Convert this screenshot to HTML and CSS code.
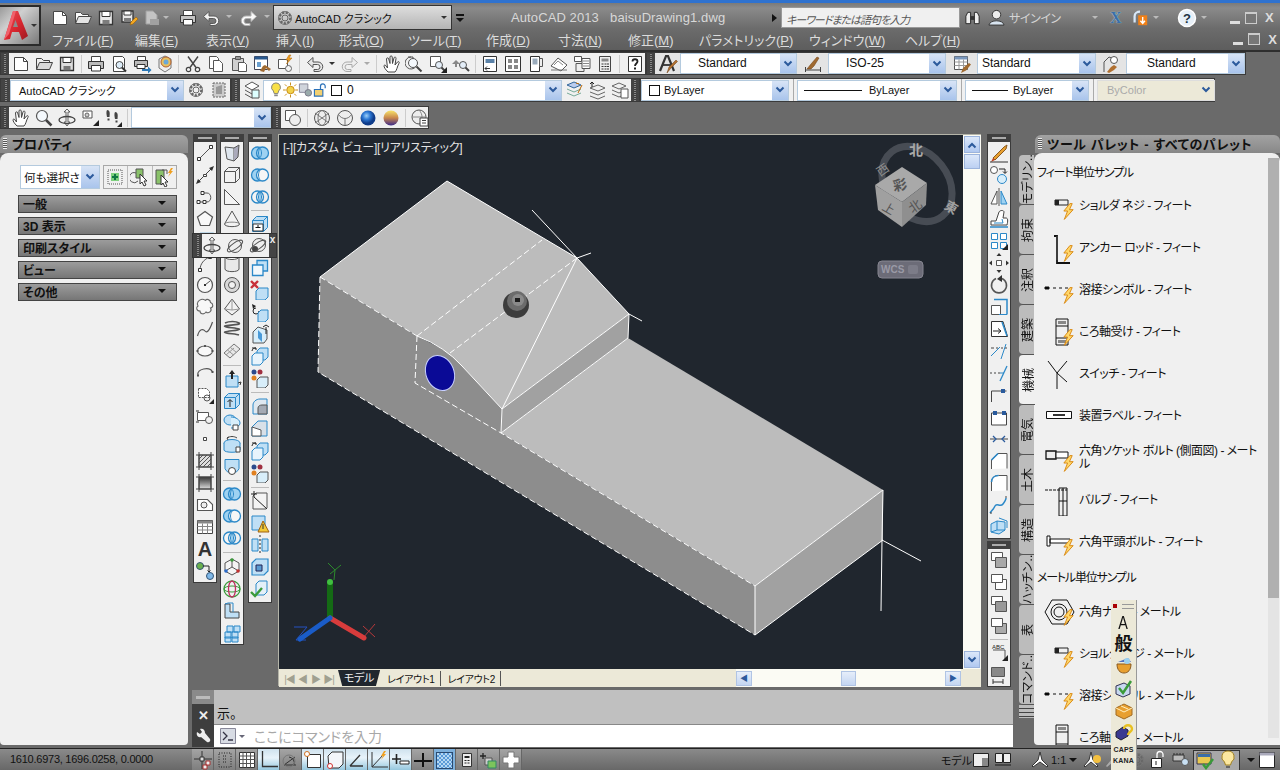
FILE: index.html
```html
<!DOCTYPE html>
<html lang="ja">
<head>
<meta charset="utf-8">
<title>AutoCAD 2013 - baisuDrawing1.dwg</title>
<link rel="stylesheet" href="styles.css">
</head>
<body>
<svg class="defs" width="0" height="0">
<defs>
<symbol id="chev" viewBox="0 0 10 8"><path d="M1.5 1.5 5 5l3.5-3.5" fill="none" stroke="#2c5a9c" stroke-width="2"/></symbol>
<symbol id="new" viewBox="0 0 20 20"><path d="M3.5 3.5h9l4 4v9h-13z" fill="#fff" stroke="#444"/><path d="M12.5 3.5v4h4" fill="none" stroke="#444"/></symbol>
<symbol id="open" viewBox="0 0 20 20"><path d="M2.5 15.5v-11h5l2 2h6v2" fill="#eee" stroke="#444"/><path d="M2.5 15.5l3-7h13l-3 7z" fill="#d9d9d9" stroke="#444"/></symbol>
<symbol id="save" viewBox="0 0 20 20"><path d="M3.5 3.5h13v13h-13z" fill="#ddd" stroke="#333" stroke-width="1.3"/><path d="M6 3.5h8v5H6z" fill="#fff" stroke="#333"/><path d="M6.500 12h7v4.500h-7z" fill="#777"/></symbol>
<symbol id="saveas" viewBox="0 0 20 20"><path d="M3 3h11v11H3z" fill="#ddd" stroke="#333" stroke-width="1.300"/><path d="M5 3h7v4H5z" fill="#fff" stroke="#333"/><path d="M5 10h7v4H5z" fill="#777"/><path d="M11 17l1-3 5-5 2 2-5 5z" fill="#e8a020" stroke="#8a5a10" stroke-width=".6"/></symbol>
<symbol id="plot" viewBox="0 0 20 20"><path d="M4 3h7l4 4v9H4z" fill="#bbb" stroke="#999"/><path d="M8 11h9v6H8z" fill="#999"/></symbol>
<symbol id="print" viewBox="0 0 20 20"><path d="M5.500 2.500h9v5h-9z" fill="#fff" stroke="#444"/><path d="M2.500 7.500h15v7h-15z" fill="#bbb" stroke="#333"/><path d="M5.500 11.500h9v5.500h-9z" fill="#fff" stroke="#333"/></symbol>
<symbol id="preview" viewBox="0 0 20 20"><path d="M4.500 2.500h9l2 2v13h-11z" fill="#fff" stroke="#444"/><circle cx="10.500" cy="11" r="3.500" fill="#dcecf8" stroke="#444"/><path d="M13 13.500l4 4" stroke="#333" stroke-width="2"/></symbol>
<symbol id="plotp" viewBox="0 0 20 20"><path d="M5.500 2.500h8v4h-8z" fill="#fff" stroke="#444"/><path d="M2.500 6.500h13v6h-13z" fill="#bbb" stroke="#333"/><path d="M5 10.500h8v4H5z" fill="#fff" stroke="#333"/><path d="M10 15h6v-2.500l3.500 3.500-3.500 3.500V17h-6z" fill="#2c79b8"/></symbol>
<symbol id="publish" viewBox="0 0 20 20"><path d="M4 5l6-3 6 3v9l-6 4-6-4z" fill="#eee" stroke="#777"/><circle cx="11" cy="8" r="5" fill="#e8c060" stroke="#b06030"/><circle cx="11" cy="8" r="2.500" fill="#6aa8d8"/></symbol>
<symbol id="cut" viewBox="0 0 20 20"><path d="M5 2.500l8 11M15 2.500l-8 11" stroke="#444" stroke-width="1.400" fill="none"/><circle cx="5.500" cy="15.500" r="2.200" fill="none" stroke="#444" stroke-width="1.200"/><circle cx="14.500" cy="15.500" r="2.200" fill="none" stroke="#444" stroke-width="1.200"/></symbol>
<symbol id="copy" viewBox="0 0 20 20"><path d="M3.500 2.500h7l2 2v10h-9z" fill="#fff" stroke="#555"/><path d="M7.500 6.500h6l3 3v8h-9z" fill="#fff" stroke="#555"/></symbol>
<symbol id="paste" viewBox="0 0 20 20"><path d="M3.500 4.500h11v12h-11z" fill="#d0d0d0" stroke="#555"/><path d="M6.500 2.500h5v3h-5z" fill="#999" stroke="#555"/><path d="M9.500 8.500h6l2 2v7h-8z" fill="#fff" stroke="#555"/></symbol>
<symbol id="match" viewBox="0 0 20 20"><path d="M2.500 2.500h13v13h-13z" fill="#fff" stroke="#445"/><path d="M2.500 2.500h13v3h-13z" fill="#29598f"/><path d="M5 8h4v5H5z" fill="#6a9fd0"/><path d="M8 17l3-5 2-1 6 4-2 2-3-3-2 4z" fill="#a06a30"/></symbol>
<symbol id="block" viewBox="0 0 20 20"><path d="M3.500 5.500h9v9h-9z" fill="#fff" stroke="#555"/><circle cx="13.500" cy="14.500" r="3" fill="#f3f3f3" stroke="#666"/><path d="M14 1l-3 5h2.500l-2 4 5.500-6h-3l2-3z" fill="#f0a020" stroke="#b06a10" stroke-width=".5"/></symbol>
<symbol id="undo" viewBox="0 0 20 20"><path d="M8 3.500 2.500 8.500 8 13.500v-3h4.500a2.500 2.500 0 0 1 0 5H9v2h4a4.500 4.500 0 0 0 0-9.500H8z" fill="#e6e6e6" stroke="#555"/></symbol>
<symbol id="redo" viewBox="0 0 20 20"><path d="M12 3.500l5.500 5-5.500 5v-3H7.500a2.500 2.500 0 0 0 0 5H11v2H7a4.500 4.500 0 0 1 0-9.500h5z" fill="#eee" stroke="#aaa"/></symbol>
<symbol id="pan" viewBox="0 0 20 20"><path d="M6 18c-3-3-4-5-4-6s1-1.500 2 0l1.500 2L4.500 5c0-1.500 2-1.500 2.200 0L8 9.500 8 3c0-1.500 2.200-1.500 2.200 0l.3 6.500L12 4c.3-1.500 2.300-1 2 .5l-1 6.500 2.500-3c1-1 2.300 0 1.500 1.200C15 13 15 16 13 18z" fill="#fff" stroke="#444"/></symbol>
<symbol id="zoom" viewBox="0 0 20 20"><circle cx="8" cy="8" r="5.500" fill="#f4f8fc" stroke="#555" stroke-width="1.200"/><path d="M12 12l5.500 5.500" stroke="#444" stroke-width="2.500"/></symbol>
<symbol id="zprev" viewBox="0 0 20 20"><path d="M6 3a6 6 0 1 0 6 5" fill="none" stroke="#555"/><path d="M3 3h5v4" fill="none" stroke="#555"/><circle cx="8" cy="9" r="4.500" fill="#f4f8fc" stroke="#555"/><path d="M11.500 12.500l5 5" stroke="#444" stroke-width="2"/></symbol>
<symbol id="zwin" viewBox="0 0 20 20"><path d="M2.500 2.500h10v10h-10z" fill="#fff" stroke="#555"/><circle cx="11" cy="11" r="3.500" fill="#e4eef8" stroke="#555"/><path d="M13.500 13.500l3 3" stroke="#444" stroke-width="2"/><path d="M13 19l6-6v6z" fill="#222"/></symbol>
<symbol id="zrealp" viewBox="0 0 20 20"><path d="M1 10l4-4 4 4H6v3H4v-3z" fill="#888"/><circle cx="12" cy="11" r="3.500" fill="#e4eef8" stroke="#555"/><path d="M14.500 13.500l3.500 3.500" stroke="#444" stroke-width="2"/></symbol>
<symbol id="props" viewBox="0 0 20 20"><path d="M3.500 2.500h13v15h-13z" fill="#fff" stroke="#333"/><path d="M5.500 5h9v4h-9z" fill="#5b82a8"/><path d="M10 14.500H5l2-2M5 14.500l2 2" stroke="#333" fill="none"/></symbol>
<symbol id="dc" viewBox="0 0 20 20"><path d="M2.500 2.500h15v15h-15z" fill="#fff" stroke="#333"/><path d="M5 5h4v4H5zM11 5h4v4h-4zM5 11h4v4H5zM11 11h4v4h-4z" fill="#888"/></symbol>
<symbol id="tp" viewBox="0 0 20 20"><path d="M4.500 2.500h9v15h-9z" fill="#fff" stroke="#333"/><path d="M6.500 4.500h5v6h-5z" fill="#9ab"/><path d="M13.500 4.500h3v8h-3z" fill="#eee" stroke="#555"/></symbol>
<symbol id="sheet" viewBox="0 0 20 20"><path d="M2 12l7-8 9 7-6 6z" fill="#fff" stroke="#555"/><path d="M5 11l4-4 5 4" fill="none" stroke="#888"/><path d="M2 16h16" stroke="#777"/></symbol>
<symbol id="markup" viewBox="0 0 20 20"><path d="M2.500 2.500h7v5h-7z" fill="#fff" stroke="#555"/><path d="M4 9.500h8v8H4z" fill="#eee" stroke="#555"/><path d="M10 4.500h8v10h-8z" fill="#fff" stroke="#555"/><path d="M11 7h6M11 9.500h6M11 12h6" stroke="#888"/></symbol>
<symbol id="calc" viewBox="0 0 20 20"><path d="M4.500 2.500h11v15h-11z" fill="#eee" stroke="#444"/><path d="M6.500 4.500h7v3h-7z" fill="#888"/><path d="M6.500 9.500h2v1h-2zM9.500 9.500h2v1h-2zM12 9.500h2v1h-2zM6.500 12h2v1h-2zM9.500 12h2v1h-2zM12 12h2v1h-2zM6.500 14.500h2v1h-2zM9.500 14.500h2v1h-2zM12 14.500h2v1h-2z" fill="#333"/></symbol>
<symbol id="help" viewBox="0 0 20 20"><path d="M3.500 2.500h13v15h-13z" fill="#fff" stroke="#333"/><path d="M7.500 7.500c0-3 5-3 5 0 0 2-2.500 2-2.500 4.500" fill="none" stroke="#222" stroke-width="1.800"/><path d="M9 13.500h2v2H9z" fill="#222"/></symbol>
<symbol id="sa" viewBox="0 0 20 20"><path d="M2 17L8 2h2l6 15" fill="none" stroke="#333" stroke-width="2.200"/><path d="M5 11h8" stroke="#333" stroke-width="1.800"/><path d="M9 19l2-6 7-7 1.500 1.500-7 7z" fill="#b07030" stroke="#6a3a10" stroke-width=".5"/></symbol>
<symbol id="sd" viewBox="0 0 20 20"><path d="M2.500 13v5M17.500 13v5M2.500 16h15" stroke="#444" fill="none"/><path d="M4 15l4-5 6-7 2 1-5 8-3 3z" fill="#a06a30" stroke="#6a3a10" stroke-width=".5"/></symbol>
<symbol id="st" viewBox="0 0 20 20"><path d="M2.500 2.500h13v13h-13z" fill="#fff" stroke="#555"/><path d="M2.500 2.500h13v3h-13z" fill="#7a98be"/><path d="M2.500 8h13M2.500 11.500h13M7 5.500v10M11.500 5.500v10" stroke="#999"/><path d="M9 19l2-5 6-5 2 1.500-5 6z" fill="#a06a30"/></symbol>
<symbol id="sm" viewBox="0 0 20 20"><path d="M3 18V8l5-5 5 2" fill="none" stroke="#555"/><circle cx="13" cy="6" r="3.500" fill="#fff" stroke="#555"/><path d="M6 18l4-5 3-2 3 2-3 3-5 3z" fill="#b07030"/></symbol>
<symbol id="gear" viewBox="0 0 20 20"><circle cx="10" cy="10" r="5.500" fill="none" stroke="#666" stroke-width="2.600" stroke-dasharray="2.400 1.300"/><circle cx="10" cy="10" r="6.500" fill="none" stroke="#777"/><circle cx="10" cy="10" r="3" fill="none" stroke="#666"/></symbol>
<symbol id="wsp" viewBox="0 0 20 20"><path d="M4 3h12v14H4z" fill="#ccc" stroke="#666" stroke-dasharray="2 1"/><path d="M7 7l6-2v9H7z" fill="#999"/></symbol>
<symbol id="lprops" viewBox="0 0 20 20"><path d="M3 6l7-4 7 4-7 4z" fill="#fff" stroke="#555"/><path d="M3 10l7 4 7-4M3 14l7 4 7-4" fill="none" stroke="#555"/><path d="M10 10h7v8h-7z" fill="#dff" stroke="#555"/></symbol>
<symbol id="bulb" viewBox="0 0 14 18"><path d="M7 1a5 5 0 0 0-3 9l1 3h4l1-3a5 5 0 0 0-3-9z" fill="#f8e048" stroke="#777"/><path d="M5 14h4v2H5z" fill="#888"/></symbol>
<symbol id="sun" viewBox="0 0 16 16"><circle cx="8" cy="8" r="4" fill="#f3d24a" stroke="#c58a10"/><path d="M8 0v3M8 13v3M0 8h3M13 8h3M2 2l2 2M12 12l2 2M2 14l2-2M12 4l2-2" stroke="#c58a10"/></symbol>
<symbol id="frz" viewBox="0 0 16 16"><path d="M1.500 1.500h9v9h-9z" fill="#d0d4dc" stroke="#889"/><circle cx="11" cy="11" r="3.500" fill="#9aa" stroke="#778"/></symbol>
<symbol id="lock" viewBox="0 0 16 16"><path d="M1.500 7.500h9v7h-9z" fill="#f3d070" stroke="#2a70b8" stroke-width="1.200"/><path d="M8 7V4a2.500 2.500 0 0 1 5 0v2" fill="none" stroke="#2a70b8" stroke-width="1.300"/></symbol>
<symbol id="lstack" viewBox="0 0 20 20"><path d="M3 5l7-3 7 3-7 3z" fill="#bce" stroke="#369"/><path d="M3 9l7 3 7-3M3 13l7 3 7-3" fill="none" stroke="#7a9"/><path d="M12 3l3 1M14 13l4-8" stroke="#b60"/></symbol>
<symbol id="lprev" viewBox="0 0 20 20"><path d="M3 8l8-3 7 3-7 3zM3 12l8 3 7-3M3 16l8 3 7-3" fill="none" stroke="#666"/><path d="M5 2v5M3 4l2-2 2 2" fill="none" stroke="#222"/></symbol>
<symbol id="lstate" viewBox="0 0 20 20"><path d="M2 6l7-3 7 3-7 3zM2 10l7 3 7-3M2 14l7 3 7-3" fill="none" stroke="#666"/><path d="M11 9h7v9h-7z" fill="#fff" stroke="#555"/></symbol>
<symbol id="orb" viewBox="0 0 20 20"><path d="M10 1l3 3h-2v10h2l-3 4-3-4h2V4H7z" fill="#eee" stroke="#444" stroke-width=".8"/><ellipse cx="10" cy="12" rx="8" ry="3.500" fill="none" stroke="#444" stroke-width="1.300"/></symbol>
<symbol id="orb2" viewBox="0 0 20 20"><circle cx="10" cy="10" r="6.500" fill="#eee" stroke="#555"/><ellipse cx="10" cy="10" rx="9" ry="3" transform="rotate(-35 10 10)" fill="none" stroke="#555"/></symbol>
<symbol id="orb3" viewBox="0 0 20 20"><circle cx="11" cy="9" r="6.500" fill="#eee" stroke="#555"/><circle cx="7" cy="13" r="3" fill="#444"/><ellipse cx="10" cy="10" rx="9" ry="3" transform="rotate(-35 10 10)" fill="none" stroke="#555"/></symbol>
<symbol id="camera" viewBox="0 0 20 20"><path d="M3 3h9v7H3z" fill="#fff" stroke="#555"/><circle cx="7" cy="7" r="2" fill="#ccc" stroke="#666"/><path d="M13 18l6-6v6z" fill="#222"/></symbol>
<symbol id="walk" viewBox="0 0 20 20"><path d="M4 2c3 0 3 3 2.500 7H4C3.500 6 3 4 4 2zM4.500 10.500h2v2h-2zM12 4c3 0 3 3 2.500 7H12c-.5-3-1-5 0-7zM12.500 12.500h2v2h-2z" fill="#444"/><path d="M14 19l5-5v5z" fill="#222"/></symbol>
<symbol id="vs1" viewBox="0 0 20 20"><path d="M2.500 2.500h10v10h-10z" fill="#fff" stroke="#555"/><circle cx="12" cy="12" r="5.500" fill="#eee" stroke="#555"/></symbol>
<symbol id="vs2" viewBox="0 0 20 20"><circle cx="10" cy="10" r="7.500" fill="#eee" stroke="#555"/><ellipse cx="10" cy="10" rx="4" ry="7.500" fill="none" stroke="#777"/><path d="M3 5l14 10M17 5L3 15" stroke="#777"/></symbol>
<symbol id="vs3" viewBox="0 0 20 20"><circle cx="10" cy="10" r="7.500" fill="#eee" stroke="#555"/><path d="M3 6c4 6 10 6 14 0M10 17V11" fill="none" stroke="#777"/></symbol>
<radialGradient id="gb" cx=".4" cy=".35"><stop offset="0" stop-color="#9ed0f8"/><stop offset=".5" stop-color="#2e7ad6"/><stop offset="1" stop-color="#0f3c8a"/></radialGradient>
<linearGradient id="gy" x1="0" y1="0" x2="0" y2="1"><stop offset="0" stop-color="#f8e46a"/><stop offset=".5" stop-color="#c8864c"/><stop offset="1" stop-color="#3a2a8c"/></linearGradient>
<linearGradient id="gr" x1="0" y1="0" x2="1" y2="1"><stop offset="0" stop-color="#e8525a"/><stop offset=".55" stop-color="#d8262e"/><stop offset="1" stop-color="#9c1a22"/></linearGradient>
<symbol id="vs4" viewBox="0 0 20 20"><circle cx="10" cy="10" r="7.500" fill="url(#gb)"/></symbol>
<symbol id="vs5" viewBox="0 0 20 20"><circle cx="10" cy="10" r="7.500" fill="url(#gy)"/></symbol>
<symbol id="vs6" viewBox="0 0 20 20"><circle cx="9" cy="9" r="7" fill="#eee" stroke="#555"/><path d="M2 9h14M9 2c4 4 4 10 0 14" fill="none" stroke="#888"/><path d="M10 10h8v8h-8z" fill="#fff" stroke="#444"/><path d="M12 12.500h4M12 15h4" stroke="#444"/></symbol>

<symbol id="l-line" viewBox="0 0 20 20"><path d="M4 16 16 4" stroke="#555"/><path d="M2.500 14.500h3v3h-3zM14.500 2.500h3v3h-3z" fill="#fff" stroke="#333"/></symbol>
<symbol id="l-xline" viewBox="0 0 20 20"><path d="M3 17 17 3" stroke="#444"/><path d="M1 19l2-5 3 3zM19 1l-2 5-3-3z" fill="#333"/><path d="M8.500 9.500h3v2h-3z" fill="#fff" stroke="#444"/></symbol>
<symbol id="l-pline" viewBox="0 0 20 20"><path d="M4 15h8c5 0 5-9 0-9H8" fill="none" stroke="#555"/><path d="M2 13.500h3v3H2zM8 13.500h3v3H8zM6 4.500h3v3H6z" fill="#fff" stroke="#333"/></symbol>
<symbol id="l-poly" viewBox="0 0 20 20"><path d="M10 2.500 17.500 8l-3 8.500h-9L2.500 8z" fill="#f8f8f8" stroke="#555" stroke-width="1.200"/></symbol>
<symbol id="l-arc" viewBox="0 0 20 20"><path d="M5 17c0-6 4-11 10-13" fill="none" stroke="#555"/><path d="M3.500 15.500h3v3h-3zM13.500 2.500h3v3h-3z" fill="#fff" stroke="#333"/></symbol>
<symbol id="l-circle" viewBox="0 0 20 20"><circle cx="10" cy="10" r="7.500" fill="#f8f8f8" stroke="#555" stroke-width="1.200"/><path d="M10 10l5-4" stroke="#555"/><path d="M9 9h2v2H9z" fill="#333"/></symbol>
<symbol id="l-cloud" viewBox="0 0 20 20"><path d="M6 2.500c3-1 4 1 4.500 1 1-2 5-1 5 2 3 1 3 5 0 5.500 2 3-2 6-4.500 4-2 3-6 2-6-1-4 0-4-4-2-5-2-3 1-6 3-6.500z" fill="#f8f8f8" stroke="#666" stroke-width="1.100"/></symbol>
<symbol id="l-spline" viewBox="0 0 20 20"><path d="M2.500 17c2-8 6-7 7.500-5s4 1 7.500-9" fill="none" stroke="#555" stroke-width="1.200"/></symbol>
<symbol id="l-ell" viewBox="0 0 20 20"><ellipse cx="10" cy="10" rx="7.500" ry="5" fill="#f8f8f8" stroke="#555" stroke-width="1.100"/><path d="M1.500 9h2v2h-2zM16.500 9h2v2h-2zM9 4h2v2H9z" fill="#555"/></symbol>
<symbol id="l-ella" viewBox="0 0 20 20"><path d="M3 12C1 6 15 3 17.500 9" fill="none" stroke="#555" stroke-width="1.100"/><path d="M2 11.500h2v2H2zM16.500 8h2v2h-2z" fill="#555"/></symbol>
<symbol id="l-insert" viewBox="0 0 20 20"><path d="M3.500 3.500h8l3 3v6h-11z" fill="#fff" stroke="#555" stroke-dasharray="2 1"/><circle cx="12" cy="13" r="3" fill="none" stroke="#555"/><path d="M14 19l5-5v5z" fill="#222"/></symbol>
<symbol id="l-block" viewBox="0 0 20 20"><path d="M2.500 5.500h11v8h-11z" fill="#fff" stroke="#555"/><circle cx="14" cy="13" r="3.500" fill="#f0f0f0" stroke="#555"/><path d="M1 4h3M1 15h3" stroke="#333"/></symbol>
<symbol id="l-point" viewBox="0 0 20 20"><path d="M8.500 8.500h3v3h-3z" fill="#fff" stroke="#444"/></symbol>
<symbol id="l-hatch" viewBox="0 0 20 20"><path d="M4 4h12v12H4z" fill="#ddd" stroke="#444"/><path d="M4 8l4-4M4 12l8-8M4 16 16 4M8 16l8-8M12 16l4-4" stroke="#555"/><path d="M1 4h18M1 16h18M4 1v18M16 1v18" stroke="#444"/></symbol>
<symbol id="l-grad" viewBox="0 0 20 20"><linearGradient id="gg" x1="0" y1="0" x2="0" y2="1"><stop offset="0" stop-color="#333"/><stop offset="1" stop-color="#ddd"/></linearGradient><path d="M4 4h12v12H4z" fill="url(#gg)" stroke="#444"/><path d="M1 4h18M1 16h18M4 1v18M16 1v18" stroke="#444"/></symbol>
<symbol id="l-region" viewBox="0 0 20 20"><path d="M2.500 4.500h10l5 5v6h-15z" fill="#fff" stroke="#555" stroke-width="1.100"/><circle cx="9" cy="10" r="3" fill="#eee" stroke="#555"/></symbol>
<symbol id="l-table" viewBox="0 0 20 20"><path d="M2.500 3.500h15v13h-15z" fill="#fff" stroke="#444"/><path d="M2.500 3.500h15v3h-15z" fill="#888"/><path d="M2.500 9.500h15M2.500 13h15M7.500 6.500v10M12.500 6.500v10" stroke="#888"/></symbol>
<symbol id="l-adsel" viewBox="0 0 20 20"><circle cx="5" cy="5" r="3.500" fill="#6ab04c" stroke="#357"/><circle cx="15" cy="15" r="3.500" fill="#7fb8e8" stroke="#357"/><path d="M8 5h6v6M12.500 9.500l1.500 1.500 1.500-1.500" fill="none" stroke="#222"/></symbol>

<symbol id="c-box" viewBox="0 0 20 20"><path d="M2.500 6.500l4-4h11v11l-4 4h-11z" fill="#f2f2f2" stroke="#555"/><path d="M2.500 6.500h11v11M13.500 6.500l4-4" fill="none" stroke="#555"/></symbol>
<symbol id="c-pol" viewBox="0 0 20 20"><path d="M3 4l9 1v13l-7-2z" fill="#dfe6ee" stroke="#555"/><path d="M12 5l5-3-1 12-4 4" fill="#aab" stroke="#555"/></symbol>
<symbol id="c-wedge" viewBox="0 0 20 20"><path d="M2.500 2.500v15h15z" fill="#f4f4f4" stroke="#555"/><path d="M2.500 2.500l15 15" stroke="#555"/></symbol>
<symbol id="c-cone" viewBox="0 0 20 20"><path d="M10 2 2.500 15c0 3.500 15 3.500 15 0z" fill="#f2f2f2" stroke="#555"/><path d="M2.500 15c0-2.500 15-2.500 15 0" fill="none" stroke="#888"/></symbol>
<symbol id="c-sph" viewBox="0 0 20 20"><circle cx="10" cy="10" r="7.500" fill="#eee" stroke="#555"/></symbol>
<symbol id="c-cyl" viewBox="0 0 20 20"><path d="M3 4v12c0 3.500 14 3.500 14 0V4z" fill="#e8e8e8" stroke="#555"/><ellipse cx="10" cy="4" rx="7" ry="2.500" fill="#fff" stroke="#555"/></symbol>
<symbol id="c-tor" viewBox="0 0 20 20"><circle cx="10" cy="10" r="7.500" fill="#d8d8d8" stroke="#555"/><circle cx="10" cy="10" r="3.500" fill="#f2f2f2" stroke="#555"/></symbol>
<symbol id="c-pyr" viewBox="0 0 20 20"><path d="M10 2 2.500 12 10 18l7.500-6z" fill="#f2f2f2" stroke="#555"/><path d="M10 2v11M2.500 12 10 13l7.500-1" fill="none" stroke="#999"/></symbol>
<symbol id="c-helix" viewBox="0 0 20 20"><path d="M3 4c4-2 11-2 14 0s-11 2-14 3 11 2 14 3-11 2-14 3 11 2 14 3" fill="none" stroke="#555" stroke-width="1.600"/></symbol>
<symbol id="c-plan" viewBox="0 0 20 20"><path d="M2 12 12 3l6 5-10 9z" fill="#e8e8e8" stroke="#777"/><path d="M5.500 9l6 5M8.500 6.500l6 5M4 14l8-7" stroke="#999"/></symbol>
<symbol id="b-press" viewBox="0 0 20 20"><path d="M4 7h12v11H4z" fill="#bfdff5" stroke="#2b88c8"/><path d="M10 1l3 4h-2v5H9V5H7z" fill="#222"/><path d="M16 14l3-1-1 3" stroke="#333" fill="none"/></symbol>
<symbol id="b-ext" viewBox="0 0 20 20"><path d="M2.500 6.500l4-4h11v11l-4 4h-11z" fill="#bfdff5" stroke="#2b88c8"/><path d="M2.500 6.500h11v11M13.500 6.500l4-4" fill="none" stroke="#2b88c8"/><path d="M8 16V9M5.500 11 8 8.500l2.500 2.500" fill="none" stroke="#222"/></symbol>
<symbol id="b-loft" viewBox="0 0 20 20"><ellipse cx="8" cy="7" rx="6" ry="5" fill="#bfdff5" stroke="#2b88c8"/><path d="M9 4c5 0 9 3 9 6s-4 5-9 5" fill="#d8eefa" stroke="#2b88c8"/><path d="M11 12h5v5h-5z" fill="#fff" stroke="#444"/></symbol>
<symbol id="b-rev" viewBox="0 0 20 20"><ellipse cx="10" cy="8" rx="8" ry="3.500" fill="#bfdff5" stroke="#2b88c8"/><path d="M2 8v7c0 3 16 3 16 0V8" fill="#bfdff5" stroke="#2b88c8"/><path d="M5 3c3-2 7-2 10 0M5 3l2-1M5 3l1 2" fill="none" stroke="#444"/><path d="M14 12h4v5h-4z" fill="#fff" stroke="#444"/></symbol>
<symbol id="b-swp" viewBox="0 0 20 20"><path d="M3 2.500h14v9c-2 6-12 6-14 0z" fill="#bfdff5" stroke="#2b88c8"/><circle cx="10" cy="14" r="3.500" fill="#fff" stroke="#444"/></symbol>
<symbol id="b-un" viewBox="0 0 20 20"><circle cx="7.500" cy="10" r="6" fill="#9ed2f2" stroke="#2b88c8" stroke-width="1.300"/><circle cx="12.500" cy="10" r="6" fill="#9ed2f2" stroke="#2b88c8" stroke-width="1.300"/><path d="M10 5.500c-2 2-2 7 0 9" fill="none" stroke="#2b88c8"/><path d="M10 5.500c2 2 2 7 0 9" fill="none" stroke="#2b88c8"/></symbol>
<symbol id="b-sub" viewBox="0 0 20 20"><circle cx="7.500" cy="10" r="6" fill="#9ed2f2" stroke="#2b88c8" stroke-width="1.300"/><circle cx="12.500" cy="10" r="6" fill="#f6f6f6" stroke="#2b88c8" stroke-width="1.300"/><path d="M10 5.500c-2 2-2 7 0 9" fill="none" stroke="#2b88c8"/></symbol>
<symbol id="b-int" viewBox="0 0 20 20"><circle cx="7.500" cy="10" r="6" fill="#f4f4f4" stroke="#2b88c8" stroke-width="1.300"/><circle cx="12.500" cy="10" r="6" fill="none" stroke="#2b88c8" stroke-width="1.300"/><path d="M10 5.500c-2 2-2 7 0 9 2-2 2-7 0-9z" fill="#9ed2f2" stroke="#2b88c8"/></symbol>
<symbol id="b-giz" viewBox="0 0 20 20"><path d="M10 2l7 4v8l-7 4-7-4V6z" fill="#f4f4f4" stroke="#555"/><path d="M10 10V4M10 10l-5 3M10 10l5 3" stroke="#555"/><circle cx="10" cy="3" r="1.800" fill="#3a9a3a"/><circle cx="4" cy="14" r="1.800" fill="#2b6ac8"/><circle cx="16" cy="14" r="1.800" fill="#c03030"/></symbol>
<symbol id="b-orb" viewBox="0 0 20 20"><circle cx="10" cy="10" r="8" fill="#f0f0f0" stroke="#3a9a3a" stroke-width="1.300"/><ellipse cx="10" cy="10" rx="8" ry="3" fill="none" stroke="#3a9a3a"/><ellipse cx="10" cy="10" rx="3.500" ry="8" fill="none" stroke="#c03060" stroke-width="1.300"/></symbol>
<symbol id="b-pols" viewBox="0 0 20 20"><path d="M3 3h5v8h9v6H3z" fill="#bfdff5" stroke="#444"/><path d="M3 3l3-1h5v9" fill="none" stroke="#2b88c8"/></symbol>
<symbol id="b-arr" viewBox="0 0 20 20"><path d="M3 9h6v6H3zM10 9h6v6h-6zM5 3h6v6H5zM12 3h6v6h-6zM3 14h6v5H3zM10 14h6v5h-6z" fill="#bfdff5" stroke="#2b88c8"/></symbol>
<symbol id="f-ext" viewBox="0 0 20 20"><path d="M2.500 6.500l4-4h11v11l-4 4h-11z" fill="#bfdff5" stroke="#2b88c8"/><path d="M2.500 6.500h11v11M13.500 6.500l4-4" fill="none" stroke="#2b88c8"/><path d="M3 10h10v7H3z" fill="#fff" stroke="#333"/><path d="M5.500 13.500h5M8 11v2" stroke="#111"/></symbol>
<symbol id="f-off" viewBox="0 0 20 20"><path d="M7 2.500h10.500V13H7z" fill="#bfdff5" stroke="#2b88c8" stroke-width="1.300"/><path d="M2.500 7H13v10.500H2.500z" fill="#f2f8fc" stroke="#2b88c8" stroke-width="1.300"/></symbol>
<symbol id="f-del" viewBox="0 0 20 20"><path d="M1 1l7 7M8 1 1 8" stroke="#c8303a" stroke-width="2.400"/><path d="M6 11l3-3h9v9l-3 3H6z" fill="#bfdff5" stroke="#2b88c8"/></symbol>
<symbol id="f-rot" viewBox="0 0 20 20"><path d="M6 6a3 3 0 1 0 3 3" fill="none" stroke="#222"/><path d="M2 2l4 2-3 3z" fill="#222"/><path d="M8 11l3-3h7v9l-3 3H8z" fill="#bfdff5" stroke="#2b88c8"/></symbol>
<symbol id="f-tap" viewBox="0 0 20 20"><path d="M3 8l5-5 9 3v9l-3 4H3z" fill="#d8eefa" stroke="#555"/><path d="M8 6l4 4v8L8 14z" fill="#4a9ad8"/><path d="M16 3v7M13 3l3-2 3 2" stroke="#222" fill="none"/></symbol>
<symbol id="f-copy" viewBox="0 0 20 20"><path d="M7 5l3-3h8v9l-3 3H7z" fill="#bfdff5" stroke="#2b88c8"/><path d="M2 10l3-3h8v9l-3 3H2z" fill="#e8f4fc" stroke="#2b88c8"/><path d="M2 5c0-2 2-3 4-3M2 2h4v2" stroke="#222" fill="none"/></symbol>
<symbol id="f-col" viewBox="0 0 20 20"><circle cx="4" cy="4" r="2.500" fill="#2c4a8c"/><circle cx="10" cy="4" r="2.500" fill="#a03040"/><circle cx="4" cy="10" r="2.500" fill="#e08020"/><path d="M7 12l3-3h8v8l-3 3H7z" fill="#d8eefa" stroke="#555"/></symbol>
<symbol id="f-fil" viewBox="0 0 20 20"><path d="M3 17V8c0-3 3-6 7-6h7v15z" fill="#dfe8f0" stroke="#2b88c8"/><path d="M8 17V11c0-2 2-3 4-3h5v9z" fill="#a4aab4" stroke="#555"/></symbol>
<symbol id="f-cham" viewBox="0 0 20 20"><path d="M2 8l6-6h9v15H2z" fill="#d8e0e8" stroke="#2b88c8"/><path d="M2 8l9 3v6H2z" fill="#fff" stroke="#555"/></symbol>
<symbol id="f-ins" viewBox="0 0 20 20"><path d="M3 5l3-3h11v15l-1 1H3z" fill="#f4f4f4" stroke="#555"/><path d="M4 6l13 12M1 3h6M4 0v6" stroke="#222"/></symbol>
<symbol id="f-warn" viewBox="0 0 20 20"><path d="M2 3h13v14H2z" fill="#bfdff5" stroke="#2b88c8"/><path d="M13 8l6 11H8z" fill="#f0c838" stroke="#a06010"/><path d="M13 11v5" stroke="#333"/></symbol>
<symbol id="f-sli" viewBox="0 0 20 20"><path d="M2 4h6v12H2zM12 4h6v12h-6z" fill="#bfdff5" stroke="#2b88c8"/><path d="M10 0v20" stroke="#222" stroke-dasharray="2 2"/></symbol>
<symbol id="f-thk" viewBox="0 0 20 20"><path d="M2 6l4-4h12v12l-4 4H2z" fill="#bfdff5" stroke="#2b88c8" stroke-width="1.200"/><path d="M6 8h6v6H6z" fill="#5a9ad0" stroke="#225"/></symbol>
<symbol id="f-chk" viewBox="0 0 20 20"><path d="M6 5l3-3h8v11l-3 3H6z" fill="#e4f0f8" stroke="#2b88c8"/><path d="M1 13l4 4 7-8" fill="none" stroke="#3a9a3a" stroke-width="2.400"/></symbol>

<symbol id="r-erase" viewBox="0 0 20 20"><path d="M4 15l11-11 3-2-1 4L6 17z" fill="#e8a030" stroke="#8a5a20"/><path d="M2 19l2-4 2 2z" fill="#c04020"/><path d="M1 19h18" stroke="#333"/></symbol>
<symbol id="r-copy" viewBox="0 0 20 20"><circle cx="5" cy="5" r="3.500" fill="#fff" stroke="#555"/><circle cx="13" cy="14" r="4.500" fill="#d8eefa" stroke="#2b88c8"/><path d="M10 4h6v4M14 6.500l2 2 2-2" fill="none" stroke="#222"/></symbol>
<symbol id="r-mir" viewBox="0 0 20 20"><path d="M10 1v18" stroke="#555"/><path d="M8 4v13H2z" fill="#fff" stroke="#555"/><path d="M12 4v13h6z" fill="#9ed2f2" stroke="#2b88c8"/></symbol>
<symbol id="r-off" viewBox="0 0 20 20"><path d="M2 16v-4h5l3-9c1-2 5-2 5 0l-1 6h3c2 0 2 3 1 7z" fill="#fff" stroke="#444"/><path d="M1 18h18" stroke="#2b88c8" stroke-width="1.500"/><path d="M5 14h9l-1-4" stroke="#2b88c8" fill="none"/></symbol>
<symbol id="r-arr" viewBox="0 0 20 20"><path d="M2.500 2.500h6v6h-6zM11.500 2.500h6v6h-6z" fill="#fff" stroke="#2b88c8"/><path d="M2.500 11.500h6v6h-6zM11.500 11.500h6v6h-6z" fill="#fff" stroke="#2b88c8"/><path d="M13 19l6-6v6z" fill="#222"/></symbol>
<symbol id="r-mov" viewBox="0 0 20 20"><path d="M7.500 7.500h5v5h-5z" fill="#fff" stroke="#555"/><path d="M10 0l2.500 3h-5zM10 20l-2.500-3h5zM0 10l3-2.500v5zM20 10l-3 2.500v-5z" fill="#333"/></symbol>
<symbol id="r-rot" viewBox="0 0 20 20"><path d="M13 3.500A7.500 7.500 0 1 1 7 3.500" fill="none" stroke="#555" stroke-width="1.600"/><path d="M13 0v7l-5-3z" fill="#333"/></symbol>
<symbol id="r-sca" viewBox="0 0 20 20"><path d="M2.500 8.500h9v9h-9z" fill="#fff" stroke="#555"/><path d="M5 2.500h13v15" fill="none" stroke="#2b88c8" stroke-width="1.500"/><path d="M18 17.500H10" stroke="#2b88c8"/></symbol>
<symbol id="r-str" viewBox="0 0 20 20"><path d="M2.500 2.500H14l4.500 15H2.500z" fill="#fff" stroke="#333"/><path d="M4 12h8M9 9.500l3 2.500-3 2.500" fill="none" stroke="#222"/><path d="M13 3l5 14" stroke="#2b88c8" stroke-width="1.500"/></symbol>
<symbol id="r-trim" viewBox="0 0 20 20"><path d="M2 15l9-9" stroke="#2b88c8"/><path d="M12 18 17 3" stroke="#2b88c8"/><path d="M2 7h3M7 7h2M12 7h2M16 7h2" stroke="#444"/></symbol>
<symbol id="r-ext" viewBox="0 0 20 20"><path d="M1 10h2M5 10h2M9 10h2" stroke="#444"/><path d="M11 18 18 3" stroke="#2b88c8" stroke-width="1.300"/><path d="M11 10h4" stroke="#2b88c8"/></symbol>
<symbol id="r-bp" viewBox="0 0 20 20"><path d="M2.500 17V6h15" fill="none" stroke="#444"/><path d="M12 4h4v4h-4z" fill="#2a5a9c"/></symbol>
<symbol id="r-bk" viewBox="0 0 20 20"><path d="M2.500 18V6h15v12h-15" fill="#fff" stroke="#444"/><path d="M4 4h4v4H4zM13 4h4v4h-4z" fill="#2a5a9c"/></symbol>
<symbol id="r-jn" viewBox="0 0 20 20"><path d="M1 10h18" stroke="#444"/><path d="M4 7l3 3-3 3M16 7l-3 3 3 3" fill="none" stroke="#2a5a9c" stroke-width="1.300"/></symbol>
<symbol id="r-chm" viewBox="0 0 20 20"><path d="M2.500 18V9L9 2.500h9v15" fill="#fff" stroke="#555"/><path d="M2.500 9 9 2.500" stroke="#2b88c8" stroke-width="1.600"/></symbol>
<symbol id="r-fil" viewBox="0 0 20 20"><path d="M2.500 18V9c0-4 3-6.500 7-6.500h8.500v15" fill="#fff" stroke="#555"/><path d="M2.500 9c0-4 3-6.500 7-6.500" fill="none" stroke="#2b88c8" stroke-width="1.600"/></symbol>
<symbol id="r-bl" viewBox="0 0 20 20"><path d="M1 18c3-4 3-3 5-7s5 2 8-2 3-6 3-6" fill="none" stroke="#2b88c8" stroke-width="1.500"/><path d="M1 18h2M17 1v2" stroke="#444"/></symbol>
<symbol id="r-exp" viewBox="0 0 20 20"><path d="M2 7l6-3 8 1v8l-6 4-8-2z" fill="#bfdff5" stroke="#2b88c8"/><path d="M8 4v9l-6 2M8 13l8 0" fill="none" stroke="#2b88c8"/><path d="M10 1l8 3v7" fill="none" stroke="#2b88c8"/></symbol>
<symbol id="d-1" viewBox="0 0 20 20"><path d="M2.500 2.500h11v8h-11z" fill="#fff" stroke="#555"/><path d="M6.500 7.500h11v10h-11z" fill="#a8a8a8" stroke="#555"/></symbol>
<symbol id="d-2" viewBox="0 0 20 20"><path d="M6.500 7.500h11v10h-11z" fill="#fff" stroke="#555"/><path d="M2.500 2.500h11v8h-11z" fill="#fff" stroke="#555"/></symbol>
<symbol id="d-3" viewBox="0 0 20 20"><path d="M2.500 2.500h11v8h-11z" fill="#fff" stroke="#555"/><path d="M6.500 7.500h11v10h-11z" fill="#999" stroke="#555"/></symbol>
<symbol id="d-4" viewBox="0 0 20 20"><path d="M6.500 7.500h11v10h-11z" fill="#aaa" stroke="#555"/><path d="M2.500 2.500h11v8h-11z" fill="#fff" stroke="#555"/></symbol>
<symbol id="d-5" viewBox="0 0 20 20"><path d="M4 7h12v10" fill="none" stroke="#555"/><path d="M13 18l6-6v6z" fill="#222"/><text x="3" y="6" font-size="6" font-family="Liberation Sans" fill="#222">ABC</text></symbol>
<symbol id="d-6" viewBox="0 0 20 20"><path d="M2.500 2.500h13v9h-13z" fill="#888" stroke="#555"/><path d="M4 14v5M14 14v5M4 17h10" stroke="#333"/></symbol>

<symbol id="bolt" viewBox="0 0 14 20"><path d="M8.500 1.500 2 9.500h4L2.500 18.500 12 8H8l3-6.500z" fill="#ffd76a" stroke="#d8860e" stroke-width="1"/></symbol>
<symbol id="p1" viewBox="0 0 32 32"><path d="M12 10h13v5H12z" fill="none" stroke="#222"/><path d="M12 10h4v5h-4z" fill="#222"/></symbol>
<symbol id="p2" viewBox="0 0 32 32"><path d="M11 4h3v27h13" fill="none" stroke="#111" stroke-width="1.800"/><path d="M14 4v24" stroke="#555"/></symbol>
<symbol id="p3" viewBox="0 0 32 32"><path d="M2 13h4v2H2zM10 14h3M16 14h3M22 14h3" stroke="#111"/></symbol>
<symbol id="p4" viewBox="0 0 32 32"><path d="M13 3h12v26H13zM13 10h12M13 22h12" fill="none" stroke="#111"/><path d="M15 5h8v3h-8zM15 24h8v3h-8z" fill="#888"/></symbol>
<symbol id="p5" viewBox="0 0 32 32"><path d="M5 3l9 12L24 3M14 15v16M14 15l10 9" fill="none" stroke="#111"/></symbol>
<symbol id="p6" viewBox="0 0 32 32"><path d="M3.500 11.500h25v7h-25z" fill="#fff" stroke="#111"/><path d="M10 14h12v2H10z" fill="#333"/></symbol>
<symbol id="p7" viewBox="0 0 32 32"><path d="M3 9h10v8H3z" fill="#eee" stroke="#111" stroke-width="1.300"/><path d="M13 10h12v6H13z" fill="#fff" stroke="#111"/></symbol>
<symbol id="p8" viewBox="0 0 32 32"><path d="M2 6h22" stroke="#111" stroke-dasharray="3 1"/><path d="M16 4h8v28h-8zM20 4v28M16 17h8" fill="none" stroke="#111"/></symbol>
<symbol id="p9" viewBox="0 0 32 32"><path d="M4 10h3v10H4zM7 13h20v4H7z" fill="#fff" stroke="#111"/></symbol>
<symbol id="p10" viewBox="0 0 32 32"><path d="M9 4h15l7 12-7 12H9L2 16z" fill="none" stroke="#111"/><circle cx="16" cy="16" r="8" fill="none" stroke="#111"/><circle cx="16" cy="16" r="5" fill="none" stroke="#111"/></symbol>
</defs>
</svg>

<div class="app">
  <header class="head">
    <div class="appbtn">
      <svg class="applogo" viewBox="0 0 26 32"><path d="M1 30 10 1h5l10 25-6 4-3-8H9l-2 7z" fill="url(#gr)"/><path d="M1 30 10 1h3L6 24z" fill="#f0606a"/><path d="M10 17h5l-2.500-7z" fill="#8c8c8c"/></svg>
      <i class="caret appc"></i>
    </div>
    <div class="headrows">
      <div class="qrow">
        <div class="q qf"><svg class="i"><use href="#new"/></svg></div>
        <div class="q"><svg class="i"><use href="#open"/></svg></div>
        <div class="q"><svg class="i"><use href="#save"/></svg></div>
        <div class="q"><svg class="i"><use href="#saveas"/></svg></div>
        <div class="q"><svg class="i"><use href="#plot"/></svg></div>
        <i class="caret lite"></i>
        <div class="q q2"><svg class="i"><use href="#print"/></svg></div>
        <div class="q"><svg class="i"><use href="#undo"/></svg></div>
        <i class="caret lite c3"></i>
        <div class="q q5"><svg class="i"><use href="#redo"/></svg></div>
        <i class="caret lite c3"></i>
        <div class="wscombo">
          <svg class="i"><use href="#gear"/></svg>
          <span class="wstext">AutoCAD クラシック</span>
          <i class="caret"></i>
        </div>
        <div class="moreq"><i class="bar"></i><i class="caret blk"></i></div>
        <div class="doc">AutoCAD 2013&nbsp;&nbsp;&nbsp;baisuDrawing1.dwg</div>
        <i class="rtri"></i>
        <div class="search">キーワードまたは語句を入力</div>
        <svg class="binoc" viewBox="0 0 18 16"><path d="M2 14V6l2-4h3v12zM11 14V2h3l2 4v8z" fill="#eee" stroke="#222"/><path d="M7 6h4v4H7z" fill="#333"/></svg>
        <svg class="user" viewBox="0 0 18 18"><circle cx="9" cy="6" r="4.500" fill="#eee" stroke="#333"/><path d="M1 17c1-6 15-6 16 0z" fill="#d8e4f0" stroke="#333"/></svg>
        <span class="signin">サインイン</span>
        <i class="caret lite cm1"></i>
        <span class="xlogo">X</span>
        <svg class="exch" viewBox="0 0 20 20"><path d="M4 15V8c0-3 3-5 6-5" fill="none" stroke="#d8e8f8" stroke-width="2.500"/><path d="M8 7h10v11H8z" fill="#f08018"/><path d="M13 9v6M10.500 13l2.500 3 2.500-3" stroke="#fff" fill="none" stroke-width="1.500"/></svg>
        <i class="caret lite"></i>
        <svg class="qhelp" viewBox="0 0 20 20"><circle cx="10" cy="10" r="8.500" fill="#e8f0f8" stroke="#fff" stroke-width="1.500"/><text x="10" y="15" font-size="13" font-weight="bold" text-anchor="middle" font-family="Liberation Sans" fill="#234">?</text></svg>
        <i class="caret lite"></i>
        <div class="winbtns"><i class="wmin"></i><i class="wres"></i><span class="wx">X</span></div>
      </div>
      <nav class="menu">
        <span class="mi">ファイル(<u>F</u>)</span>
        <span class="mi">編集(<u>E</u>)</span>
        <span class="mi">表示(<u>V</u>)</span>
        <span class="mi">挿入(<u>I</u>)</span>
        <span class="mi">形式(<u>O</u>)</span>
        <span class="mi">ツール(<u>T</u>)</span>
        <span class="mi">作成(<u>D</u>)</span>
        <span class="mi">寸法(<u>N</u>)</span>
        <span class="mi">修正(<u>M</u>)</span>
        <span class="mi">パラメトリック(<u>P</u>)</span>
        <span class="mi">ウィンドウ(<u>W</u>)</span>
        <span class="mi">ヘルプ(<u>H</u>)</span>
        <div class="winbtns win2"><i class="wmin"></i><i class="wres"></i><span class="wx">X</span></div>
      </nav>
    </div>
  </header>

  <div class="tbrow r1">
    <div class="tb t1">
      <i class="grip"></i>
      <span class="t"><svg class="i"><use href="#new"/></svg></span><span class="t"><svg class="i"><use href="#open"/></svg></span><span class="t"><svg class="i"><use href="#save"/></svg></span>
      <i class="s"></i>
      <span class="t"><svg class="i"><use href="#print"/></svg></span><span class="t"><svg class="i"><use href="#preview"/></svg></span><span class="t"><svg class="i"><use href="#plotp"/></svg></span><span class="t"><svg class="i"><use href="#publish"/></svg></span>
      <i class="s s5"></i>
      <span class="t"><svg class="i"><use href="#cut"/></svg></span><span class="t"><svg class="i"><use href="#copy"/></svg></span><span class="t"><svg class="i"><use href="#paste"/></svg></span><span class="t"><svg class="i"><use href="#match"/></svg></span><span class="t"><svg class="i"><use href="#block"/></svg></span>
      <i class="s s7"></i>
      <span class="t"><svg class="i"><use href="#undo"/></svg></span><span class="td"><i class="caret"></i></span><span class="t"><svg class="i"><use href="#redo"/></svg></span><span class="td"><i class="caret lt"></i></span>
      <i class="s s7"></i>
      <span class="t"><svg class="i"><use href="#pan"/></svg></span><span class="t"><svg class="i"><use href="#zprev"/></svg></span><span class="t"><svg class="i"><use href="#zwin"/></svg></span><span class="t"><svg class="i"><use href="#zrealp"/></svg></span>
      <i class="s"></i>
      <span class="t"><svg class="i"><use href="#props"/></svg></span><span class="t"><svg class="i"><use href="#dc"/></svg></span><span class="t"><svg class="i"><use href="#tp"/></svg></span><span class="t"><svg class="i"><use href="#sheet"/></svg></span><span class="t"><svg class="i"><use href="#markup"/></svg></span><span class="t"><svg class="i"><use href="#calc"/></svg></span>
      <i class="s s7"></i>
      <span class="t"><svg class="i"><use href="#help"/></svg></span>
    </div>
    <div class="tb t2">
      <i class="grip"></i>
      <span class="tw w25"><svg class="i"><use href="#sa"/></svg></span>
      <div class="cb w117 pl17"><span>Standard</span><b class="dd"><svg class="ch"><use href="#chev"/></svg></b></div>
      <span class="tw w31"><svg class="i"><use href="#sd"/></svg></span>
      <div class="cb w118 pl17"><span>ISO-25</span><b class="dd"><svg class="ch"><use href="#chev"/></svg></b></div>
      <span class="tw w31"><svg class="i"><use href="#st"/></svg></span>
      <div class="cb w119 pl4"><span>Standard</span><b class="dd"><svg class="ch"><use href="#chev"/></svg></b></div>
      <span class="tw w30"><svg class="i"><use href="#sm"/></svg></span>
      <div class="cb w119 pl20"><span>Standard</span><b class="dd"><svg class="ch"><use href="#chev"/></svg></b></div>
    </div>
  </div>

  <div class="tbrow r2">
    <div class="tb t3">
      <i class="grip"></i>
      <div class="cb w174 pl8 wsname"><span>AutoCAD クラシック</span><b class="dd"><svg class="ch"><use href="#chev"/></svg></b></div>
      <span class="t"><svg class="i"><use href="#gear"/></svg></span><span class="t"><svg class="i"><use href="#wsp"/></svg></span>
    </div>
    <div class="tb t4">
      <i class="grip"></i>
      <span class="t"><svg class="i"><use href="#lprops"/></svg></span>
      <div class="cb w299 pl4 lcb">
        <svg class="li lb"><use href="#bulb"/></svg><svg class="li"><use href="#sun"/></svg><svg class="li"><use href="#frz"/></svg><svg class="li"><use href="#lock"/></svg><i class="sq"></i><span class="zero">0</span>
        <b class="dd"><svg class="ch"><use href="#chev"/></svg></b>
      </div>
      <span class="t"><svg class="i"><use href="#lstack"/></svg></span><span class="t"><svg class="i"><use href="#lprev"/></svg></span><span class="t"><svg class="i"><use href="#lstate"/></svg></span>
      <i class="grip g2"></i>
    </div>
    <div class="tb t5">
      <div class="cb w148 pl4 small"><i class="sq"></i><span>ByLayer</span><b class="dd"><svg class="ch"><use href="#chev"/></svg></b></div>
      <i class="cgap"></i>
      <div class="cb w160 pl4 small"><i class="ln l58"></i><span>ByLayer</span><b class="dd"><svg class="ch"><use href="#chev"/></svg></b></div>
      <i class="cgap"></i>
      <div class="cb w124 pl4 small"><i class="ln l34"></i><span>ByLayer</span><b class="dd"><svg class="ch"><use href="#chev"/></svg></b></div>
      <i class="cgap"></i>
      <div class="cb w118 pl5 small dis"><span>ByColor</span><b class="dd"><svg class="ch"><use href="#chev"/></svg></b></div>
    </div>
  </div>

  <div class="tbrow r3">
    <div class="tb t6">
      <i class="grip"></i>
      <span class="t"><svg class="i"><use href="#pan"/></svg></span><span class="t"><svg class="i"><use href="#zoom"/></svg></span><span class="t"><svg class="i"><use href="#orb"/></svg></span><span class="t"><svg class="i"><use href="#camera"/></svg></span><span class="t"><svg class="i"><use href="#walk"/></svg></span>
      <i class="s s7"></i>
      <div class="cb w140"><span></span><b class="dd"><svg class="ch"><use href="#chev"/></svg></b></div>
    </div>
    <div class="tb t7">
      <i class="grip"></i>
      <span class="t"><svg class="i"><use href="#vs1"/></svg></span>
      <i class="s"></i>
      <span class="t"><svg class="i"><use href="#vs2"/></svg></span><span class="t"><svg class="i"><use href="#vs3"/></svg></span><span class="t"><svg class="i"><use href="#vs4"/></svg></span><span class="t"><svg class="i"><use href="#vs5"/></svg></span>
      <i class="s"></i>
      <span class="t"><svg class="i"><use href="#vs6"/></svg></span>
    </div>
  </div>

  <main class="main">
    <aside class="props">
      <div class="ptitle"><i class="pgrip"></i>プロパティ</div>
      <div class="pbody">
        <div class="pctrl">
          <div class="pselect"><span>何も選択さ</span><b class="dd"><svg class="ch"><use href="#chev"/></svg></b></div>
          <div class="pbtns">
            <span class="pb"><svg class="i" viewBox="0 0 20 20"><path d="M3 3h14v14H3z" fill="none" stroke="#555" stroke-dasharray="1 1"/><path d="M6 6h8v8H6z" fill="#7fd07f"/><path d="M10 7v6M7 10h6" stroke="#174" stroke-width="2"/></svg></span>
            <span class="pb"><svg class="i" viewBox="0 0 20 20"><path d="M6 6a5 5 0 1 0 2 8" fill="none" stroke="#555"/><path d="M6 2h7v9H6z" fill="#8ac26a" stroke="#555"/><path d="M10 7l7 7-3 0 2 4-2 1-2-4-2 2z" fill="#fff" stroke="#333"/></svg></span>
            <span class="pb"><svg class="i" viewBox="0 0 20 20"><path d="M2 3h8v14H2z" fill="#8ac26a" stroke="#555"/><path d="M8 3h5v4" fill="none" stroke="#555"/><path d="M7 8l7 7-3 0 2 4-2 1-2-4-2 2z" fill="#fff" stroke="#333"/><path d="M17 1l-3 5h2l-2 4 5-6h-2l2-3z" fill="#f0a020"/></svg></span>
          </div>
        </div>
        <div class="sect">一般<i class="caret blk"></i></div>
        <div class="sect">3D 表示<i class="caret blk"></i></div>
        <div class="sect">印刷スタイル<i class="caret blk"></i></div>
        <div class="sect">ビュー<i class="caret blk"></i></div>
        <div class="sect">その他<i class="caret blk"></i></div>
      </div>
    </aside>

    <div class="center">
      <div class="work">
        <div class="vbar c1">
          <i class="vh"></i>
          <span class="v"><svg class="i"><use href="#l-line"/></svg></span><span class="v"><svg class="i"><use href="#l-xline"/></svg></span><span class="v"><svg class="i"><use href="#l-pline"/></svg></span><span class="v"><svg class="i"><use href="#l-poly"/></svg></span><span class="v"><svg class="i"><use href="#r-sca"/></svg></span><span class="v"><svg class="i"><use href="#l-arc"/></svg></span><span class="v"><svg class="i"><use href="#l-circle"/></svg></span><span class="v"><svg class="i"><use href="#l-cloud"/></svg></span><span class="v"><svg class="i"><use href="#l-spline"/></svg></span><span class="v"><svg class="i"><use href="#l-ell"/></svg></span><span class="v"><svg class="i"><use href="#l-ella"/></svg></span><span class="v"><svg class="i"><use href="#l-insert"/></svg></span><span class="v"><svg class="i"><use href="#l-block"/></svg></span><span class="v"><svg class="i"><use href="#l-point"/></svg></span><span class="v"><svg class="i"><use href="#l-hatch"/></svg></span><span class="v"><svg class="i"><use href="#l-grad"/></svg></span><span class="v"><svg class="i"><use href="#l-region"/></svg></span><span class="v"><svg class="i"><use href="#l-table"/></svg></span><span class="v biga">A</span><span class="v"><svg class="i"><use href="#l-adsel"/></svg></span>
        </div>
        <div class="vbar c2">
          <i class="vh"></i>
          <span class="v"><svg class="i"><use href="#c-pol"/></svg></span><span class="v"><svg class="i"><use href="#c-box"/></svg></span><span class="v"><svg class="i"><use href="#c-wedge"/></svg></span><span class="v"><svg class="i"><use href="#c-cone"/></svg></span><span class="v"><svg class="i"><use href="#c-sph"/></svg></span><span class="v"><svg class="i"><use href="#c-cyl"/></svg></span><span class="v"><svg class="i"><use href="#c-tor"/></svg></span><span class="v"><svg class="i"><use href="#c-pyr"/></svg></span><span class="v"><svg class="i"><use href="#c-helix"/></svg></span><span class="v"><svg class="i"><use href="#c-plan"/></svg></span>
          <i class="vs h6"></i>
          <span class="v"><svg class="i"><use href="#b-press"/></svg></span><span class="v"><svg class="i"><use href="#b-ext"/></svg></span><span class="v"><svg class="i"><use href="#b-loft"/></svg></span><span class="v"><svg class="i"><use href="#b-rev"/></svg></span><span class="v"><svg class="i"><use href="#b-swp"/></svg></span>
          <i class="vs h5"></i>
          <span class="v"><svg class="i"><use href="#b-un"/></svg></span><span class="v"><svg class="i"><use href="#b-sub"/></svg></span><span class="v"><svg class="i"><use href="#b-int"/></svg></span>
          <i class="vs h7"></i>
          <span class="v"><svg class="i"><use href="#b-giz"/></svg></span><span class="v"><svg class="i"><use href="#b-orb"/></svg></span><span class="v"><svg class="i"><use href="#b-pols"/></svg></span><span class="v"><svg class="i"><use href="#b-arr"/></svg></span>
        </div>
        <div class="vbar c3">
          <i class="vh"></i>
          <span class="v"><svg class="i"><use href="#b-un"/></svg></span><span class="v"><svg class="i"><use href="#b-sub"/></svg></span><span class="v"><svg class="i"><use href="#b-int"/></svg></span>
          <i class="vs h5"></i>
          <span class="v"><svg class="i"><use href="#f-ext"/></svg></span><span class="v"><svg class="i"><use href="#b-ext"/></svg></span><span class="v"><svg class="i"><use href="#f-off"/></svg></span><span class="v"><svg class="i"><use href="#f-del"/></svg></span><span class="v"><svg class="i"><use href="#f-rot"/></svg></span><span class="v"><svg class="i"><use href="#f-tap"/></svg></span><span class="v"><svg class="i"><use href="#f-copy"/></svg></span><span class="v"><svg class="i"><use href="#f-col"/></svg></span>
          <i class="vs h7"></i>
          <span class="v"><svg class="i"><use href="#f-fil"/></svg></span><span class="v"><svg class="i"><use href="#f-cham"/></svg></span><span class="v"><svg class="i"><use href="#f-copy"/></svg></span><span class="v"><svg class="i"><use href="#f-col"/></svg></span>
          <i class="vs h6"></i>
          <span class="v"><svg class="i"><use href="#f-ins"/></svg></span><span class="v"><svg class="i"><use href="#f-warn"/></svg></span><span class="v"><svg class="i"><use href="#f-sli"/></svg></span><span class="v"><svg class="i"><use href="#f-thk"/></svg></span><span class="v"><svg class="i"><use href="#f-chk"/></svg></span>
        </div>

        <section class="view">
          <div class="viewtop">
            <div class="canvas">
              <div class="vlabel">[-][カスタム ビュー][リアリスティック]</div>
              <svg class="draw" viewBox="279 135 684 533">
                <polygon points="320,277 318,372 755,635 755,586 501,433 502,409 462,366 450,353 417,336" fill="#8d8d8d"/>
                <polygon points="755,586 883,490 883,540 755,635" fill="#a1a1a1"/>
                <polygon points="501,433 628,338 883,490 755,586" fill="#bcbcbc"/>
                <polygon points="502,409 629,314 628,338 501,433" fill="#a1a1a1"/>
                <path d="M320 277 447 181 577 258 629 314 502 409 462 366Q445 347 417 336Z" fill="#bcbcbc"/>
                <g fill="none" stroke="#fff" stroke-width="1">
                  <path d="M320 277 447 181 577 258 629 314 502 409 462 366Q445 347 417 336"/>
                  <path d="M502 409 501 433 628 338 629 314"/>
                  <path d="M577 258 502 409"/>
                  <path d="M532 210 577 258 591 253M629 314 642 321"/>
                  <path d="M883 490 882 540 921 561M882 540 881 611"/>
                  <path d="M755 586 883 490M755 586V635L883 540"/>
                  <g stroke-dasharray="6 3">
                    <path d="M320 277 417 336"/>
                    <path d="M320 277 318 372 755 635"/>
                    <path d="M417 336 415 383 501 433 755 586"/>
                    <path d="M417 336 542 240M577 258 450 353"/>
                  </g>
                </g>
                <ellipse cx="440" cy="373" rx="14" ry="18" transform="rotate(-22 440 373)" fill="#0a0a96" stroke="#c8d0ff"/>
                <circle cx="516" cy="305" r="13" fill="#3c3c3c"/>
                <circle cx="517" cy="301" r="10" fill="#6c6c6c"/>
                <circle cx="518" cy="300" r="6" fill="#8a8a8a"/>
                <path d="M515 298h5v4h-5z" fill="#1c1c1c"/>
                <g fill="none">
                  <ellipse cx="917" cy="184" rx="41" ry="31" transform="rotate(52 917 184)" stroke="#474c54" stroke-width="7"/>
                </g>
                <polygon points="902,167 875,185 902,202 927,183" fill="#a9a9a9"/>
                <polygon points="875,185 878,210 902,227 902,202" fill="#a0a0a0"/>
                <polygon points="902,202 927,183 926,205 902,227" fill="#8f8f8f"/>
                <g font-family="Noto Sans CJK JP" text-anchor="middle">
                  <text x="916" y="155" font-size="14" font-weight="700" fill="#a8a8a8">北</text>
                  <text x="883" y="174" font-size="12" fill="#8f8f8f" transform="rotate(-35 883 170)">西</text>
                  <text x="951" y="212" font-size="13" font-weight="700" fill="#a0a0a0" transform="rotate(30 951 208)">東</text>
                  <text x="900" y="190" font-size="14" font-weight="700" fill="#555" transform="rotate(-10 900 185)">彩</text>
                  <text x="889" y="213" font-size="12" fill="#555" transform="rotate(30 889 208)">上</text>
                  <text x="915" y="211" font-size="13" fill="#555" transform="rotate(-35 915 206)">北</text>
                </g>
                <rect x="878" y="261" width="45" height="17" rx="4" fill="#6c6c78" stroke="#858590"/>
                <text x="881" y="273" font-size="10" font-weight="700" font-family="Liberation Sans" fill="#9a9aa6">WCS</text>
                <rect x="908" y="265" width="10" height="9" rx="2" fill="#7c7c88"/>
                <g fill="none">
                  <path d="M330 574 335 570 341 565M335 570 328 563M335 570 334 580" stroke="#2c8a2c"/>
                  <path d="M363 626 375 637M375 624 363 638" stroke="#b8383a"/>
                  <path d="M294 627H307L296 640H306" stroke="#2450c0"/>
                </g>
                <path d="M330 618V584" stroke="#146a14" stroke-width="6" stroke-linecap="round"/>
                <circle cx="330" cy="582" r="3" fill="#40c040"/>
                <path d="M330 618 364 638" stroke="#d83c3c" stroke-width="5" stroke-linecap="round"/>
                <path d="M330 618 300 639" stroke="#1a5cc8" stroke-width="5" stroke-linecap="round"/>
              </svg>
            </div>
            <div class="vscroll">
              <b class="sbtn"><svg class="ch up"><use href="#chev"/></svg></b>
              <b class="sthumb"></b>
              <i class="strack"></i>
              <b class="sbtn"><svg class="ch"><use href="#chev"/></svg></b>
            </div>
          </div>
          <div class="tabs">
            <div class="tnav"><i class="nv">|◀</i><i class="nv">◀</i><i class="nv">▶</i><i class="nv">▶|</i></div>
            <span class="ltab on">モデル</span>
            <span class="ltab">レイアウト1</span>
            <span class="ltab">レイアウト2</span>
            <div class="hs">
              <b class="hb">◀</b><i class="hspace"></i><b class="hthumb"></b><i class="hspace"></i><b class="hb">▶</b>
            </div>
          </div>
        </section>

        <div class="rcol">
          <div class="vbar c4">
            <i class="vh"></i>
            <span class="v"><svg class="i"><use href="#r-erase"/></svg></span><span class="v"><svg class="i"><use href="#r-copy"/></svg></span><span class="v"><svg class="i"><use href="#r-mir"/></svg></span><span class="v"><svg class="i"><use href="#r-off"/></svg></span><span class="v"><svg class="i"><use href="#r-arr"/></svg></span><span class="v"><svg class="i"><use href="#r-mov"/></svg></span><span class="v"><svg class="i"><use href="#r-rot"/></svg></span><span class="v"><svg class="i"><use href="#r-sca"/></svg></span><span class="v"><svg class="i"><use href="#r-str"/></svg></span><span class="v"><svg class="i"><use href="#r-trim"/></svg></span><span class="v"><svg class="i"><use href="#r-ext"/></svg></span><span class="v"><svg class="i"><use href="#r-bp"/></svg></span><span class="v"><svg class="i"><use href="#r-bk"/></svg></span><span class="v"><svg class="i"><use href="#r-jn"/></svg></span><span class="v"><svg class="i"><use href="#r-chm"/></svg></span><span class="v"><svg class="i"><use href="#r-fil"/></svg></span><span class="v"><svg class="i"><use href="#r-bl"/></svg></span><span class="v"><svg class="i"><use href="#r-exp"/></svg></span>
          </div>
          <div class="vbar c5">
            <i class="vh"></i>
            <span class="v"><svg class="i"><use href="#d-1"/></svg></span><span class="v"><svg class="i"><use href="#d-2"/></svg></span><span class="v"><svg class="i"><use href="#d-3"/></svg></span><span class="v"><svg class="i"><use href="#d-4"/></svg></span>
            <i class="vs h5"></i>
            <span class="v"><svg class="i"><use href="#d-5"/></svg></span><span class="v"><svg class="i"><use href="#d-6"/></svg></span>
          </div>
        </div>
      </div>

      <div class="cmd">
        <div class="cmdside">
          <i class="cgrip"></i>
          <span class="cx">✕</span>
          <svg class="wrench" viewBox="0 0 16 16"><path d="M2 4l3 2 2-2-2-3c3-1 5 1 5 4l5 6c1 2-1 4-3 3L6 9C3 10 1 7 2 4z" fill="#eee"/></svg>
        </div>
        <div class="cmdmain">
          <div class="cmdhist">示。</div>
          <div class="cmdin">
            <svg class="prom" viewBox="0 0 16 16"><path d="M.5.500h15v15H.5z" fill="#d8dce4" stroke="#889"/><path d="M3 4l4 4-4 4M8 12h5" fill="none" stroke="#334" stroke-width="1.300"/></svg>
            <i class="caret"></i>
            <span>ここにコマンドを入力</span>
          </div>
        </div>
      </div>
    </div>

    <aside class="palette">
      <div class="tabsv">
        <span class="vt">モデリン..</span><span class="vt">拘束</span><span class="vt">注釈</span><span class="vt">建築</span><span class="vt act">機械</span><span class="vt">電気</span><span class="vt">土木</span><span class="vt">構造</span><span class="vt">ハッチン..</span><span class="vt">表</span><span class="vt">コマンド..</span>
        <i class="vlines"></i>
      </div>
      <div class="pmain">
        <div class="ptitle pal"><i class="pgrip"></i>ツール パレット - すべてのパレット</div>
        <div class="palbody">
          <div class="plist">
            <div class="phead">フィート単位サンプル</div>
            <div class="pi"><span class="pic"><svg class="pics"><use href="#p1"/></svg><svg class="bolt"><use href="#bolt"/></svg></span><span class="ptxt">ショルダ ネジ - フィート</span></div>
            <div class="pi"><span class="pic"><svg class="pics"><use href="#p2"/></svg><svg class="bolt"><use href="#bolt"/></svg></span><span class="ptxt">アンカー ロッド - フィート</span></div>
            <div class="pi"><span class="pic"><svg class="pics"><use href="#p3"/></svg><svg class="bolt"><use href="#bolt"/></svg></span><span class="ptxt">溶接シンボル - フィート</span></div>
            <div class="pi"><span class="pic"><svg class="pics"><use href="#p4"/></svg><svg class="bolt"><use href="#bolt"/></svg></span><span class="ptxt">ころ軸受け - フィート</span></div>
            <div class="pi"><span class="pic"><svg class="pics"><use href="#p5"/></svg></span><span class="ptxt">スイッチ - フィート</span></div>
            <div class="pi"><span class="pic"><svg class="pics"><use href="#p6"/></svg></span><span class="ptxt">装置ラベル - フィート</span></div>
            <div class="pi"><span class="pic"><svg class="pics"><use href="#p7"/></svg><svg class="bolt"><use href="#bolt"/></svg></span><span class="ptxt">六角ソケット ボルト (側面図) - メートル</span></div>
            <div class="pi"><span class="pic"><svg class="pics"><use href="#p8"/></svg></span><span class="ptxt">バルブ - フィート</span></div>
            <div class="pi"><span class="pic"><svg class="pics"><use href="#p9"/></svg><svg class="bolt"><use href="#bolt"/></svg></span><span class="ptxt">六角平頭ボルト - フィート</span></div>
            <div class="phead ph2">メートル単位サンプル</div>
            <div class="pi"><span class="pic"><svg class="pics"><use href="#p10"/></svg><svg class="bolt"><use href="#bolt"/></svg></span><span class="ptxt">六角ナット - メートル</span></div>
            <div class="pi"><span class="pic"><svg class="pics"><use href="#p1"/></svg><svg class="bolt"><use href="#bolt"/></svg></span><span class="ptxt">ショルダ ネジ - メートル</span></div>
            <div class="pi"><span class="pic"><svg class="pics"><use href="#p3"/></svg><svg class="bolt"><use href="#bolt"/></svg></span><span class="ptxt">溶接シンボル - メートル</span></div>
            <div class="pi"><span class="pic"><svg class="pics"><use href="#p4"/></svg></span><span class="ptxt">ころ軸受け - メートル</span></div>
          </div>
          <div class="pscroll"><i class="pthumb"></i></div>
        </div>
      </div>
    </aside>
  </main>

  <footer class="status">
    <div class="coords">1610.6973, 1696.0258, 0.0000</div>
    <div class="sbgroup">
      <span class="sb"><svg class="i" viewBox="0 0 20 20"><path d="M9 1v18M1 9h18" stroke="#333"/><path d="M7 7h4v4H7z" fill="#ddd" stroke="#333"/><path d="M13 11h4v4h-4zM10 15h4v4h-4z" fill="#eee" stroke="#a33"/></svg></span>
      <span class="sb"><svg class="i" viewBox="0 0 20 20"><path d="M4 3h12v14H4z" fill="none" stroke="#222" stroke-dasharray="1 1.500"/><path d="M8 6h4M8 9h4M8 12h4" stroke="#222" stroke-dasharray="1 1"/></svg></span>
      <span class="sb"><svg class="i" viewBox="0 0 20 20"><path d="M2.500 2.500h15v15h-15z" fill="#fff" stroke="#333"/><path d="M6 2.500v15M9.500 2.500v15M13.500 2.500v15M2.500 6h15M2.500 9.500h15M2.500 13.500h15" stroke="#555"/></svg></span>
      <span class="sb on"><svg class="i" viewBox="0 0 20 20"><path d="M3.500 1v15.500H19" fill="none" stroke="#333" stroke-width="1.300"/></svg></span>
      <span class="sb"><svg class="i" viewBox="0 0 20 20"><path d="M3 15l11-8M3 15h12" stroke="#333" fill="none"/><path d="M8 7a6 6 0 0 1 5 8" fill="none" stroke="#333"/><circle cx="8" cy="11" r="6" fill="none" stroke="#777"/></svg></span>
      <span class="sb on"><svg class="i" viewBox="0 0 20 20"><path d="M4.500 4.500h13v13h-13z" fill="#fff" stroke="#333"/><circle cx="4" cy="4" r="2.500" fill="#fff" stroke="#d07020"/></svg></span>
      <span class="sb on"><svg class="i" viewBox="0 0 20 20"><path d="M3 6l4-4h11v12l-4 4H4z" fill="#f3f6fa" stroke="#333"/><circle cx="5" cy="16" r="2.500" fill="#fff" stroke="#d03030"/></svg></span>
      <span class="sb on"><svg class="i" viewBox="0 0 20 20"><path d="M3 16 13 5M3 16h13" fill="none" stroke="#333" stroke-width="1.300"/></svg></span>
      <span class="sb on"><svg class="i" viewBox="0 0 20 20"><path d="M3 2v15h16" fill="none" stroke="#333"/><path d="M3 17 15 4" stroke="#333"/><path d="M15 1l-3 5h2l-2 4 5-6h-2l2-3z" fill="#f0a020"/></svg></span>
      <span class="sb on"><svg class="i" viewBox="0 0 20 20"><path d="M1 9h9M5.500 4v10" stroke="#222" stroke-width="1.600"/><path d="M9 11h9v3H9z" fill="#fff" stroke="#222"/></svg></span>
      <span class="sb"><svg class="i" viewBox="0 0 20 20"><path d="M1 11h18M10 3v14" stroke="#111" stroke-width="2"/></svg></span>
      <span class="sb chk"><i class="checker"></i></span>
      <span class="sb"><svg class="i" viewBox="0 0 20 20"><path d="M5.500 3.500h9v13h-9z" fill="#eee" stroke="#333"/><path d="M7.500 6h5v2h-5zM7.500 10h2v1h-2zM10.500 10h2v1h-2zM7.500 12.500h2v1h-2zM10.500 12.500h2v1h-2z" fill="#222"/></svg></span>
      <span class="sb"><svg class="i" viewBox="0 0 20 20"><path d="M1 6h6M4 3v6" stroke="#222" stroke-width="1.300"/><path d="M6 8h7v7H6z" fill="#ccc" stroke="#555"/><path d="M9 11h8v7H9z" fill="#7cc45c" stroke="#386"/></svg></span>
      <span class="sb"><svg class="i" viewBox="0 0 20 20"><path d="M7 2h6v5h5v6h-5v5H7v-5H2V7h5z" fill="#fff" stroke="#777"/></svg></span>
    </div>
    <div class="stright">
      <span class="smodel">モデル</span>
      <span class="sr"><svg class="i" viewBox="0 0 20 20"><path d="M2.500 3.500h15v13h-15z" fill="#eee" stroke="#222"/><path d="M11 8h6v8h-6z" fill="#888"/></svg></span>
      <span class="sr"><svg class="i" viewBox="0 0 20 20"><path d="M2.500 3.500h7v9h-7zM10.500 3.500h7v9h-7z" fill="#eee" stroke="#222"/><path d="M2 15h16" stroke="#444" stroke-width="2"/></svg></span>
      <i class="stg"></i>
      <span class="sa"><svg class="i" viewBox="0 0 20 20"><path d="M10 2l2 8 6 6-1 1-7-5-7 5-1-1 6-6z" fill="#fff" stroke="#333"/></svg><span class="ratio">1:1</span><i class="caret blk"></i></span>
      <span class="sr"><svg class="i" viewBox="0 0 20 20"><path d="M8 2l2 8 5 6-1 1-6-5-6 5-1-1 5-6z" fill="#fff" stroke="#333"/><circle cx="14" cy="9" r="4" fill="#f4c040"/></svg></span>
      <span class="sr"><svg class="i" viewBox="0 0 20 20"><path d="M8 2l2 8 5 6-1 1-6-5-6 5-1-1 5-6z" fill="#aaa"/></svg></span>
      <span class="sr"><svg class="i"><use href="#gear"/></svg></span>
      <span class="sr"><svg class="i" viewBox="0 0 20 20"><path d="M2.500 8.500h10v9h-10z" fill="#fff" stroke="#222"/><path d="M8 8V4.500a3 3 0 0 1 6 0V7" fill="none" stroke="#fff" stroke-width="1.300"/><path d="M7 11v4" stroke="#222"/></svg></span>
      <span class="sr"><svg class="i" viewBox="0 0 20 20"><path d="M2 5h11v6H2z" fill="#bbb" stroke="#333"/><path d="M3 3v2M6 3v2M9 3v2M12 3v2" stroke="#333"/><circle cx="14" cy="12" r="3.500" fill="#c8e0f4" stroke="#555"/></svg></span>
      <span class="sgroup">
        <svg class="i" viewBox="0 0 20 20"><path d="M2 3h14v11H2z" fill="#e8c850" stroke="#335"/><path d="M3 4h12v3H3z" fill="#3a6ea8"/><path d="M8 14l3 4 7-9" fill="none" stroke="#3a9a3a" stroke-width="2.500"/></svg>
        <svg class="i" viewBox="0 0 20 20"><path d="M10 1a6 6 0 0 0-3.500 11l1 3h5l1-3A6 6 0 0 0 10 1z" fill="#fbe7a0" stroke="#a08020"/><path d="M8 16h4v2H8z" fill="#666"/></svg>
      </span>
      <i class="caret blk st"></i>
      <span class="sr"><svg class="i" viewBox="0 0 20 20"><path d="M2.500 2.500h15v15h-15z" fill="#fff" stroke="#222"/><path d="M2.500 2.500h15v3h-15z" fill="#aab"/></svg></span>
    </div>
  </footer>

  <div class="floatbar">
    <i class="grip"></i>
    <span class="f ff"><svg class="i"><use href="#orb"/></svg></span><span class="f"><svg class="i"><use href="#orb2"/></svg></span><span class="f"><svg class="i"><use href="#orb3"/></svg></span>
    <span class="fx">x</span>
  </div>

  <div class="ime">
    <div class="imetop"><i class="imedot"></i><i class="imelines"></i></div>
    <div class="imea">A</div>
    <div class="imek">般</div>
    <svg class="imei" viewBox="0 0 20 20"><path d="M3 8c0 6 3 9 7 9s7-3 7-9z" fill="#e8a030" stroke="#8a5a20"/><path d="M4 6l10-4 3 4z" fill="#5070c0"/><circle cx="13" cy="5" r="3" fill="#9ad0f0"/></svg>
    <svg class="imei" viewBox="0 0 20 20"><path d="M2 8l8-3 6 3v8l-7 3-7-3z" fill="#c8d8f0" stroke="#335"/><path d="M5 10l4 5 8-12" fill="none" stroke="#3a9a3a" stroke-width="2.500"/></svg>
    <svg class="imei" viewBox="0 0 20 20"><path d="M2 8l8-4 8 4v7l-8 4-8-4z" fill="#e8a030" stroke="#a06a20"/><path d="M2 8l8 4 8-4M7 6l7 3" fill="none" stroke="#fff0c0"/></svg>
    <svg class="imei" viewBox="0 0 20 20"><path d="M2 10l7-5 5 3v6l-7 4-5-3z" fill="#3a3a90" stroke="#223"/><path d="M10 7c0-5 8-5 8 0 0 3-4 3-4 6" fill="none" stroke="#e8c020" stroke-width="2.400"/></svg>
    <div class="imetx">CAPS</div>
    <div class="imetx">KANA</div>
  </div>
</div>
</body>
</html>
```

FILE: styles.css
```css
* { box-sizing: border-box; }
html, body { margin: 0; padding: 0; height: 100%; overflow: hidden; }
body { font-family: "Liberation Sans", "Noto Sans CJK JP", sans-serif; font-size: 12px; color: #111; font-feature-settings: "palt"; }
i, b { font-style: normal; font-weight: normal; display: block; flex: none; }
.defs { position: absolute; }
.app { position: relative; width: 1280px; height: 770px; overflow: hidden; background: #6a6a6a; display: flex; flex-direction: column; }
svg { display: block; flex: none; }
.i { width: 20px; height: 20px; }

/* header */
.head { height: 52px; flex: none; display: flex; background: linear-gradient(#2f72cf 0 3px, #7a7a7a 3px, #8a8a8a 8px, #6c6c6c 28px, #5d5d5d 50px, #2e2e2e 50px); }
.appbtn { width: 41px; height: 41px; margin-top: 5px; flex: none; display: flex; align-items: center; padding-left: 3px; border: 2px solid #2a2a2a; border-left: 0; background: linear-gradient(135deg, #9a9a9a, #d0d0d0 35%, #7a7a7a); }
.applogo { width: 26px; height: 32px; }
.appc { margin-left: 2px; border-left-width: 4px; border-right-width: 4px; border-top: 5px solid #333; }
.headrows { flex: 1; display: flex; flex-direction: column; margin-left: -1px; }
.qrow { height: 23px; margin-top: 6px; display: flex; align-items: center; color: #d4d4d4; }
.q { width: 23px; display: flex; justify-content: center; flex: none; filter: brightness(1.05); }
.qf { margin-left: 8px; }
.q2 { margin-left: 7px; }
.q5 { margin-left: 5px; }
.caret { width: 0; height: 0; border-left: 3px solid transparent; border-right: 3px solid transparent; border-top: 3px solid #333; flex: none; }
.caret.lite { border-top-color: #bbb; }
.caret.blk { border-left-width: 4px; border-right-width: 4px; border-top: 4px solid #111; }
.caret.lt { border-top-color: #aaa; }
.c3 { margin-left: 3px; }
.wscombo { width: 179px; height: 25px; margin-left: 3px; display: flex; align-items: center; padding: 0 4px 0 1px; border: 1px solid #333; background: linear-gradient(#dedede, #b4b4b4); color: #111; }
.wstext { flex: 1; font-size: 11px; white-space: nowrap; }
.moreq { width: 16px; display: flex; flex-direction: column; align-items: center; gap: 2px; }
.moreq .bar { width: 8px; height: 2px; background: #111; }
.doc { width: 303px; padding-left: 43px; font-size: 13px; letter-spacing: .1px; white-space: nowrap; color: #d8d8d8; flex: none; }
.rtri { width: 0; height: 0; border-left: 5px solid #111; border-top: 4px solid transparent; border-bottom: 4px solid transparent; margin-left: 1px; flex: none; }
.search { width: 179px; height: 21px; margin-left: 4px; padding: 3px 4px; background: #f0f0f0; border: 1px solid #999; color: #555; font-size: 11px; font-style: italic; letter-spacing: -1px; flex: none; white-space: nowrap; overflow: hidden; }
.binoc { width: 17px; height: 16px; margin-left: 4px; }
.user { width: 17px; height: 17px; margin-left: 7px; }
.signin { margin-left: 4px; font-size: 12px; width: 46px; white-space: nowrap; letter-spacing: -.4px; }
.cm1 { margin-left: 37px; }
.xlogo { width: 16px; margin-left: 12px; font-weight: 700; font-size: 16px; font-family: "Liberation Serif", serif; color: #3a6ea8; text-shadow: 0 0 1px #cfe; }
.exch { width: 18px; height: 18px; margin-left: 5px; }
.exch + .caret { margin-left: 4px; }
.qhelp { width: 20px; height: 20px; margin-left: 18px; }
.qhelp + .caret { margin-left: 4px; }
.winbtns { display: flex; align-items: center; margin-left: 23px; gap: 5px; color: #ddd; flex: none; }
.wmin { width: 10px; height: 3px; background: #ddd; margin-top: 9px; }
.wres { width: 12px; height: 12px; border: 1px solid #ccc; border-top-width: 2px; background: #777; }
.wx { font-weight: 700; font-size: 13px; margin-left: 3px; }
.menu { height: 22px; margin-top: -1px; display: flex; align-items: center; padding-left: 12px; font-size: 13px; color: #dcdcdc; white-space: nowrap; }
.mi { flex: none; }
.mi:nth-child(1) { width: 83px; }
.mi:nth-child(2) { width: 71px; }
.mi:nth-child(3) { width: 70px; }
.mi:nth-child(4) { width: 63px; }
.mi:nth-child(5) { width: 69px; }
.mi:nth-child(6) { width: 78px; }
.mi:nth-child(7) { width: 72px; }
.mi:nth-child(8) { width: 70px; }
.mi:nth-child(9) { width: 71px; }
.mi:nth-child(10) { width: 110px; }
.mi:nth-child(11) { width: 96px; }
.win2 { margin-left: auto; margin-right: 3px; }

/* toolbars */
.tbrow { display: flex; flex: none; }
.r1 { height: 23px; margin-top: 0; }
.r2 { height: 24px; margin-top: 3px; }
.r3 { height: 23px; margin-top: 4px; }
.tb { display: flex; align-items: center; background: #f0f0f0; border: 1px solid #3a3a3a; height: 100%; flex: none; }
.grip { width: 8px; height: 100%; background: repeating-linear-gradient(#3e3e3e 0 1px, #8a8a8a 1px 2px); background-size: 2px 100%; background-repeat: repeat-y; background-position: center; background-color: #444; flex: none; }
.t { width: 23px; height: 21px; display: flex; align-items: center; justify-content: center; flex: none; }
.tw { height: 21px; display: flex; align-items: center; justify-content: center; flex: none; background: #e4e4e4; }
.td { width: 12px; display: flex; justify-content: center; flex: none; }
.w25 { width: 25px; } .w30 { width: 30px; } .w31 { width: 31px; }
.s { width: 6px; height: 18px; flex: none; background: linear-gradient(#ccc, #ccc) center / 1px 100% no-repeat; }
.s5 { width: 5px; } .s7 { width: 7px; }
.t1 { width: 646px; }
.t2 { width: 600px; margin-left: 0; }
.cb { height: 21px; display: flex; align-items: center; background: #fff; border: 1px solid #b4cade; flex: none; font-size: 12px; justify-content: space-between; white-space: nowrap; padding-bottom: 0; }
.cb > span { flex: 1; margin-top: -1px; }
.cb .dd { margin-left: auto; }
.wsname { font-size: 11px; }
.dd { width: 16px; height: 100%; display: flex; align-items: center; justify-content: center; background: linear-gradient(#d8e4f6, #a9c4ec); flex: none; }
.ch { width: 10px; height: 8px; }
.ch.up { transform: rotate(180deg); }
.w117 { width: 117px; } .w118 { width: 118px; } .w119 { width: 119px; } .w174 { width: 174px; } .w299 { width: 299px; } .w148 { width: 148px; } .w160 { width: 160px; } .w124 { width: 124px; } .w140 { width: 140px; }
.pl4 { padding-left: 4px; } .pl5 { padding-left: 5px; } .pl8 { padding-left: 8px; } .pl17 { padding-left: 17px; } .pl20 { padding-left: 20px; }
.t3 { width: 231px; }
.t3 .grip { width: 9px; }
.t4 { width: 409px; margin-left: 0; }
.t5 { width: 575px; }
.t6 { width: 272px; }
.t7 { width: 157px; }
.lcb { gap: 0; justify-content: flex-start; }
.li { width: 15px; height: 16px; flex: none; margin-left: 0; }
.lb { width: 14px; margin-left: 1px; }
.sq { width: 11px; height: 11px; border: 1px solid #111; flex: none; background: #fff; margin-left: 3px; }
.zero { margin-left: 5px; flex: none !important; }
.small { font-size: 11px; }
.small > span { margin-left: 4px; }
.cgap { width: 8px; height: 100%; flex: none; background: linear-gradient(#aaa, #aaa) center / 1px 100% no-repeat; }
.g2 { margin-left: auto; }
.ln { height: 1px; background: #111; flex: none; }
.l58 { width: 58px; margin-left: 2px; margin-right: 3px; }
.l34 { width: 36px; margin-left: 2px; margin-right: 1px; }
.dis { background: #ece9d8; border-color: #ddd; color: #aaa; }
.dis .dd { background: #ece9d8; }

/* main */
.main { height: 616px; margin-top: 4px; display: flex; flex: none; }
.props { width: 188px; height: 610px; margin-top: 2px; display: flex; flex-direction: column; flex: none; }
.ptitle { height: 18px; flex: none; background: linear-gradient(#a2a2a2, #888); border-radius: 6px 6px 0 0; display: flex; align-items: center; font-weight: 700; font-size: 13px; padding: 0 0 2px 2px; color: #111; }
.pgrip { width: 4px; height: 11px; margin: 0 5px 0 1px; background: repeating-linear-gradient(#eee 0 1px, #555 1px 2px); }
.pbody { flex: 1; background: #f0f0f0; border-radius: 8px 8px 4px 4px; padding: 12px 11px 0 18px; }
.pctrl { display: flex; align-items: center; height: 24px; margin-bottom: 6px; margin-left: 2px; gap: 3px; }
.pselect { width: 80px; height: 24px; background: #fff; border: 1px solid #b4cade; display: flex; align-items: center; padding-left: 3px; font-size: 11.5px; }
.pselect span { flex: 1; white-space: nowrap; }
.pselect .dd { width: 18px; }
.pbtns { display: flex; border: 1px solid #a8a8a8; height: 24px; width: 75px; }
.pb { flex: 1; display: flex; align-items: center; justify-content: center; border-left: 1px solid #bbb; }
.pb:first-child { border-left: 0; }
.sect { width: 159px; height: 18px; margin-bottom: 4px; padding: 0 10px 2px 4px; display: flex; align-items: center; justify-content: space-between; font-weight: 700; font-size: 12px; color: #111; border: 1px solid #444; background: linear-gradient(#9c9c9c, #767676); }

.center { width: 821px; margin-left: 4px; flex: none; display: flex; flex-direction: column; }
.work { height: 556px; margin-top: 1px; flex: none; display: flex; align-items: flex-start; }
.vbar { width: 24px; flex: none; display: flex; flex-direction: column; background: #f0f0f0; border: 1px solid #3a3a3a; border-top: 0; }
.c1 { margin-left: 1px; }
.c2 { margin-left: 3px; }
.c3 { margin-left: 4px; padding-bottom: 2px; }
.vh { height: 8px; background: #3f3f3f linear-gradient(#aaa, #aaa) center / 14px 2px no-repeat; flex: none; margin: 0 -1px; }
.v { height: 22px; display: flex; align-items: center; justify-content: center; flex: none; }
.vs { flex: none; background: linear-gradient(#bbb, #bbb) center / 18px 1px no-repeat; }
.h5 { height: 5px; } .h6 { height: 6px; } .h7 { height: 7px; }
.biga { font-size: 20px; color: #333; font-weight: 700; }
.rcol { width: 24px; margin-left: 6px; flex: none; display: flex; flex-direction: column; gap: 2px; }
.c4, .c5 { margin: 0; }

.view { width: 703px; height: 552px; margin-left: 6px; flex: none; display: flex; flex-direction: column; border: 1px solid #b4b4a8; border-bottom: 0; border-right: 0; }
.viewtop { height: 534px; display: flex; flex: none; }
.canvas { flex: 1; position: relative; background: #20262e; overflow: hidden; }
.draw { width: 684px; height: 533px; }
.vlabel { position: absolute; left: 4px; top: 3px; color: #e2e2e2; font-size: 12px; letter-spacing: -.25px; white-space: nowrap; }
.vscroll { width: 18px; flex: none; display: flex; flex-direction: column; background: #fbfbf4; padding: 1px; }
.sbtn { height: 17px; flex: none; display: flex; align-items: center; justify-content: center; background: linear-gradient(#dce8fa, #b0c8f0); border: 1px solid #9cb4dc; }
.sthumb { height: 15px; margin-top: 1px; flex: none; background: linear-gradient(#dce8fa, #bcd0f2) ; border: 1px solid #9cb4dc; }
.strack { flex: 1; }
.tabs { height: 18px; flex: none; display: flex; align-items: center; background: #ece9d8; padding-left: 4px; }
.tnav { display: flex; width: 52px; flex: none; }
.nv { width: 13px; font-size: 10px; color: #a0a090; text-align: center; white-space: nowrap; letter-spacing: -1px; }
.ltab { flex: none; font-size: 10px; letter-spacing: -.3px; margin-left: 7px; white-space: nowrap; border-right: 1px solid #555; padding-right: 5px; }
.ltab.on { font-size: 11px; background: #20262e; color: #eee; margin-left: 3px; padding: 0 6px 0 6px; height: 16px; line-height: 16px; border: 0; clip-path: polygon(0 0, 100% 0, 90% 100%, 10% 100%); }
.hs { margin-left: auto; width: 225px; margin-right: 20px; display: flex; align-items: center; height: 100%; background: #fbfbf4; flex: none; }
.hb { width: 16px; height: 15px; font-size: 8px; line-height: 14px; text-align: center; color: #2c5a9c; background: linear-gradient(#e6eefa, #c4d6f2); border: 1px solid #b0c4e4; }
.hspace { flex: 1; }
.hthumb { width: 15px; height: 15px; background: linear-gradient(#e6eefa, #c4d6f2); border: 1px solid #b0c4e4; }

.cmd { height: 57px; flex: none; display: flex; }
.cmdside { width: 22px; flex: none; background: #3e3e3e; display: flex; flex-direction: column; align-items: center; }
.cgrip { height: 14px; width: 100%; background: #8a8a8a linear-gradient(#bbb, #bbb) center / 14px 3px no-repeat; }
.cx { color: #eee; font-size: 13px; font-weight: 700; margin-top: 1px; height: 21px; line-height: 21px; }
.wrench { width: 16px; height: 16px; margin-top: 2px; }
.cmdmain { flex: 1; display: flex; flex-direction: column; }
.cmdhist { height: 34px; flex: none; background: #c0c0c0; padding: 15px 0 0 3px; font-size: 13px; line-height: 17px; }
.cmdin { flex: 1; background: #fff; display: flex; align-items: center; padding-left: 6px; color: #a8a8a8; font-size: 14px; border-top: 1px solid #888; }
.prom { width: 16px; height: 16px; }
.cmdin .caret { margin: 0 5px 0 3px; border-top-color: #667; }
.cmdin span { margin-left: 4px; }

/* palette */
.palette { width: 261px; margin-left: 6px; flex: none; height: 610px; margin-top: 2px; display: flex; }
.tabsv { width: 15px; flex: none; padding-top: 20px; display: flex; flex-direction: column; }
.vt { height: 50px; flex: none; display: flex; align-items: center; justify-content: center; background: #bcbcbc; border-top: 1px solid #555; border-radius: 0 4px 4px 0; writing-mode: vertical-rl; text-orientation: sideways; transform: rotate(180deg); font-size: 12px; white-space: nowrap; overflow: hidden; }
.vt.act { background: #f0f0f0; margin-right: -1px; }
.vlines { height: 13px; flex: none; background: repeating-linear-gradient(#bcbcbc 0 3px, #444 3px 4px); }
.pmain { flex: 1; min-width: 0; display: flex; flex-direction: column; }
.pal { margin-left: 1px; letter-spacing: .6px; }
.palbody { flex: 1; min-height: 0; display: flex; background: #f0f0f0; border-radius: 8px 8px 0 4px; overflow: hidden; }
.plist { flex: 1; min-width: 0; overflow: hidden; padding-top: 6px; }
.phead { height: 26px; padding: 0 0 2px 3px; display: flex; align-items: center; font-size: 12px; letter-spacing: -1.2px; }
.ph2 { height: 28px; }
.pi { height: 42px; display: flex; align-items: center; padding-left: 9px; }
.pic { width: 32px; height: 32px; position: relative; flex: none; }
.pics { width: 32px; height: 32px; }
.bolt { width: 13px; height: 19px; position: absolute; left: 19px; top: 12px; }
.ptxt { margin-left: 4px; font-size: 12px; letter-spacing: -.5px; line-height: 13px; max-width: 180px; }
.pscroll { width: 11px; flex: none; margin: 5px 1px 7px 0; background: #e4e4e4; }
.pthumb { height: 440px; background: #b0b0b0; }

/* status */
.status { height: 23px; margin-top: -1px; flex: none; display: flex; align-items: stretch; background: linear-gradient(#8a8a8a, #666); border-top: 1px solid #222; }
.coords { width: 192px; padding: 4px 0 0 10px; font-size: 11px; letter-spacing: -.25px; color: #111; white-space: nowrap; }
.sbgroup { display: flex; flex: none; }
.sb { width: 22px; display: flex; align-items: center; justify-content: center; background: linear-gradient(#a4a4a4, #7c7c7c); border-right: 1px solid #666; }
.sb.on { background: linear-gradient(#cfe2ee, #e8f3fa 40%, #8fc4dc); }
.chk { background: #7db0dc; }
.checker { width: 17px; height: 17px; border: 1px solid #2a4a70; background: repeating-conic-gradient(#5a9ad8 0 25%, #b6d8f2 0 50%) 0 0 / 4px 4px; }
.stright { margin-left: auto; display: flex; align-items: center; padding-right: 1px; }
.smodel { font-size: 11px; width: 28px; margin-right: 1px; white-space: nowrap; color: #111; }
.sr { width: 22px; display: flex; justify-content: center; flex: none; }
.stg { width: 16px; }
.sa { width: 52px; display: flex; align-items: center; flex: none; }
.ratio { font-size: 11px; margin: 0 3px 0 1px; }
.sgroup { width: 47px; height: 21px; margin-left: 1px; display: flex; align-items: center; justify-content: space-around; background: #a8a8a8; border: 1px solid #333; }
.st { margin: 0 0 0 7px; }
.stright .sr:last-child { width: 24px; }

/* overlays */
.floatbar { position: absolute; left: 192px; top: 233px; width: 85px; height: 25px; display: flex; align-items: center; background: #f0f0f0; border: 1px solid #333; }
.floatbar .grip { width: 9px; }
.f { width: 23px; display: flex; justify-content: center; flex: none; }
.ff { margin-left: -2px; }
.fx { margin-left: auto; width: 8px; height: 100%; background: #444; color: #eee; font-size: 10px; font-weight: 700; text-align: center; }
.ime { position: absolute; left: 1111px; top: 600px; width: 26px; height: 170px; background: #ece9d8; display: flex; flex-direction: column; align-items: center; border-right: 1px solid #999; }
.imetop { width: 100%; height: 12px; display: flex; align-items: center; padding: 0 2px; }
.imedot { width: 4px; height: 4px; background: #a00; }
.imelines { width: 12px; height: 5px; margin-left: 5px; border-top: 1px solid #999; border-bottom: 1px solid #999; }
.imea { font-size: 18px; line-height: 22px; height: 22px; font-family: "Liberation Sans", sans-serif; color: #111; transform: scaleX(.8); }
.imek { font-size: 18px; line-height: 20px; height: 20px; font-weight: 700; color: #111; }
.imei { width: 20px; height: 20px; margin-top: 2px; }
.imetx { font-size: 7px; line-height: 11px; font-weight: 700; color: #222; letter-spacing: .2px; }
.imei + .imetx { margin-top: 2px; }
```
